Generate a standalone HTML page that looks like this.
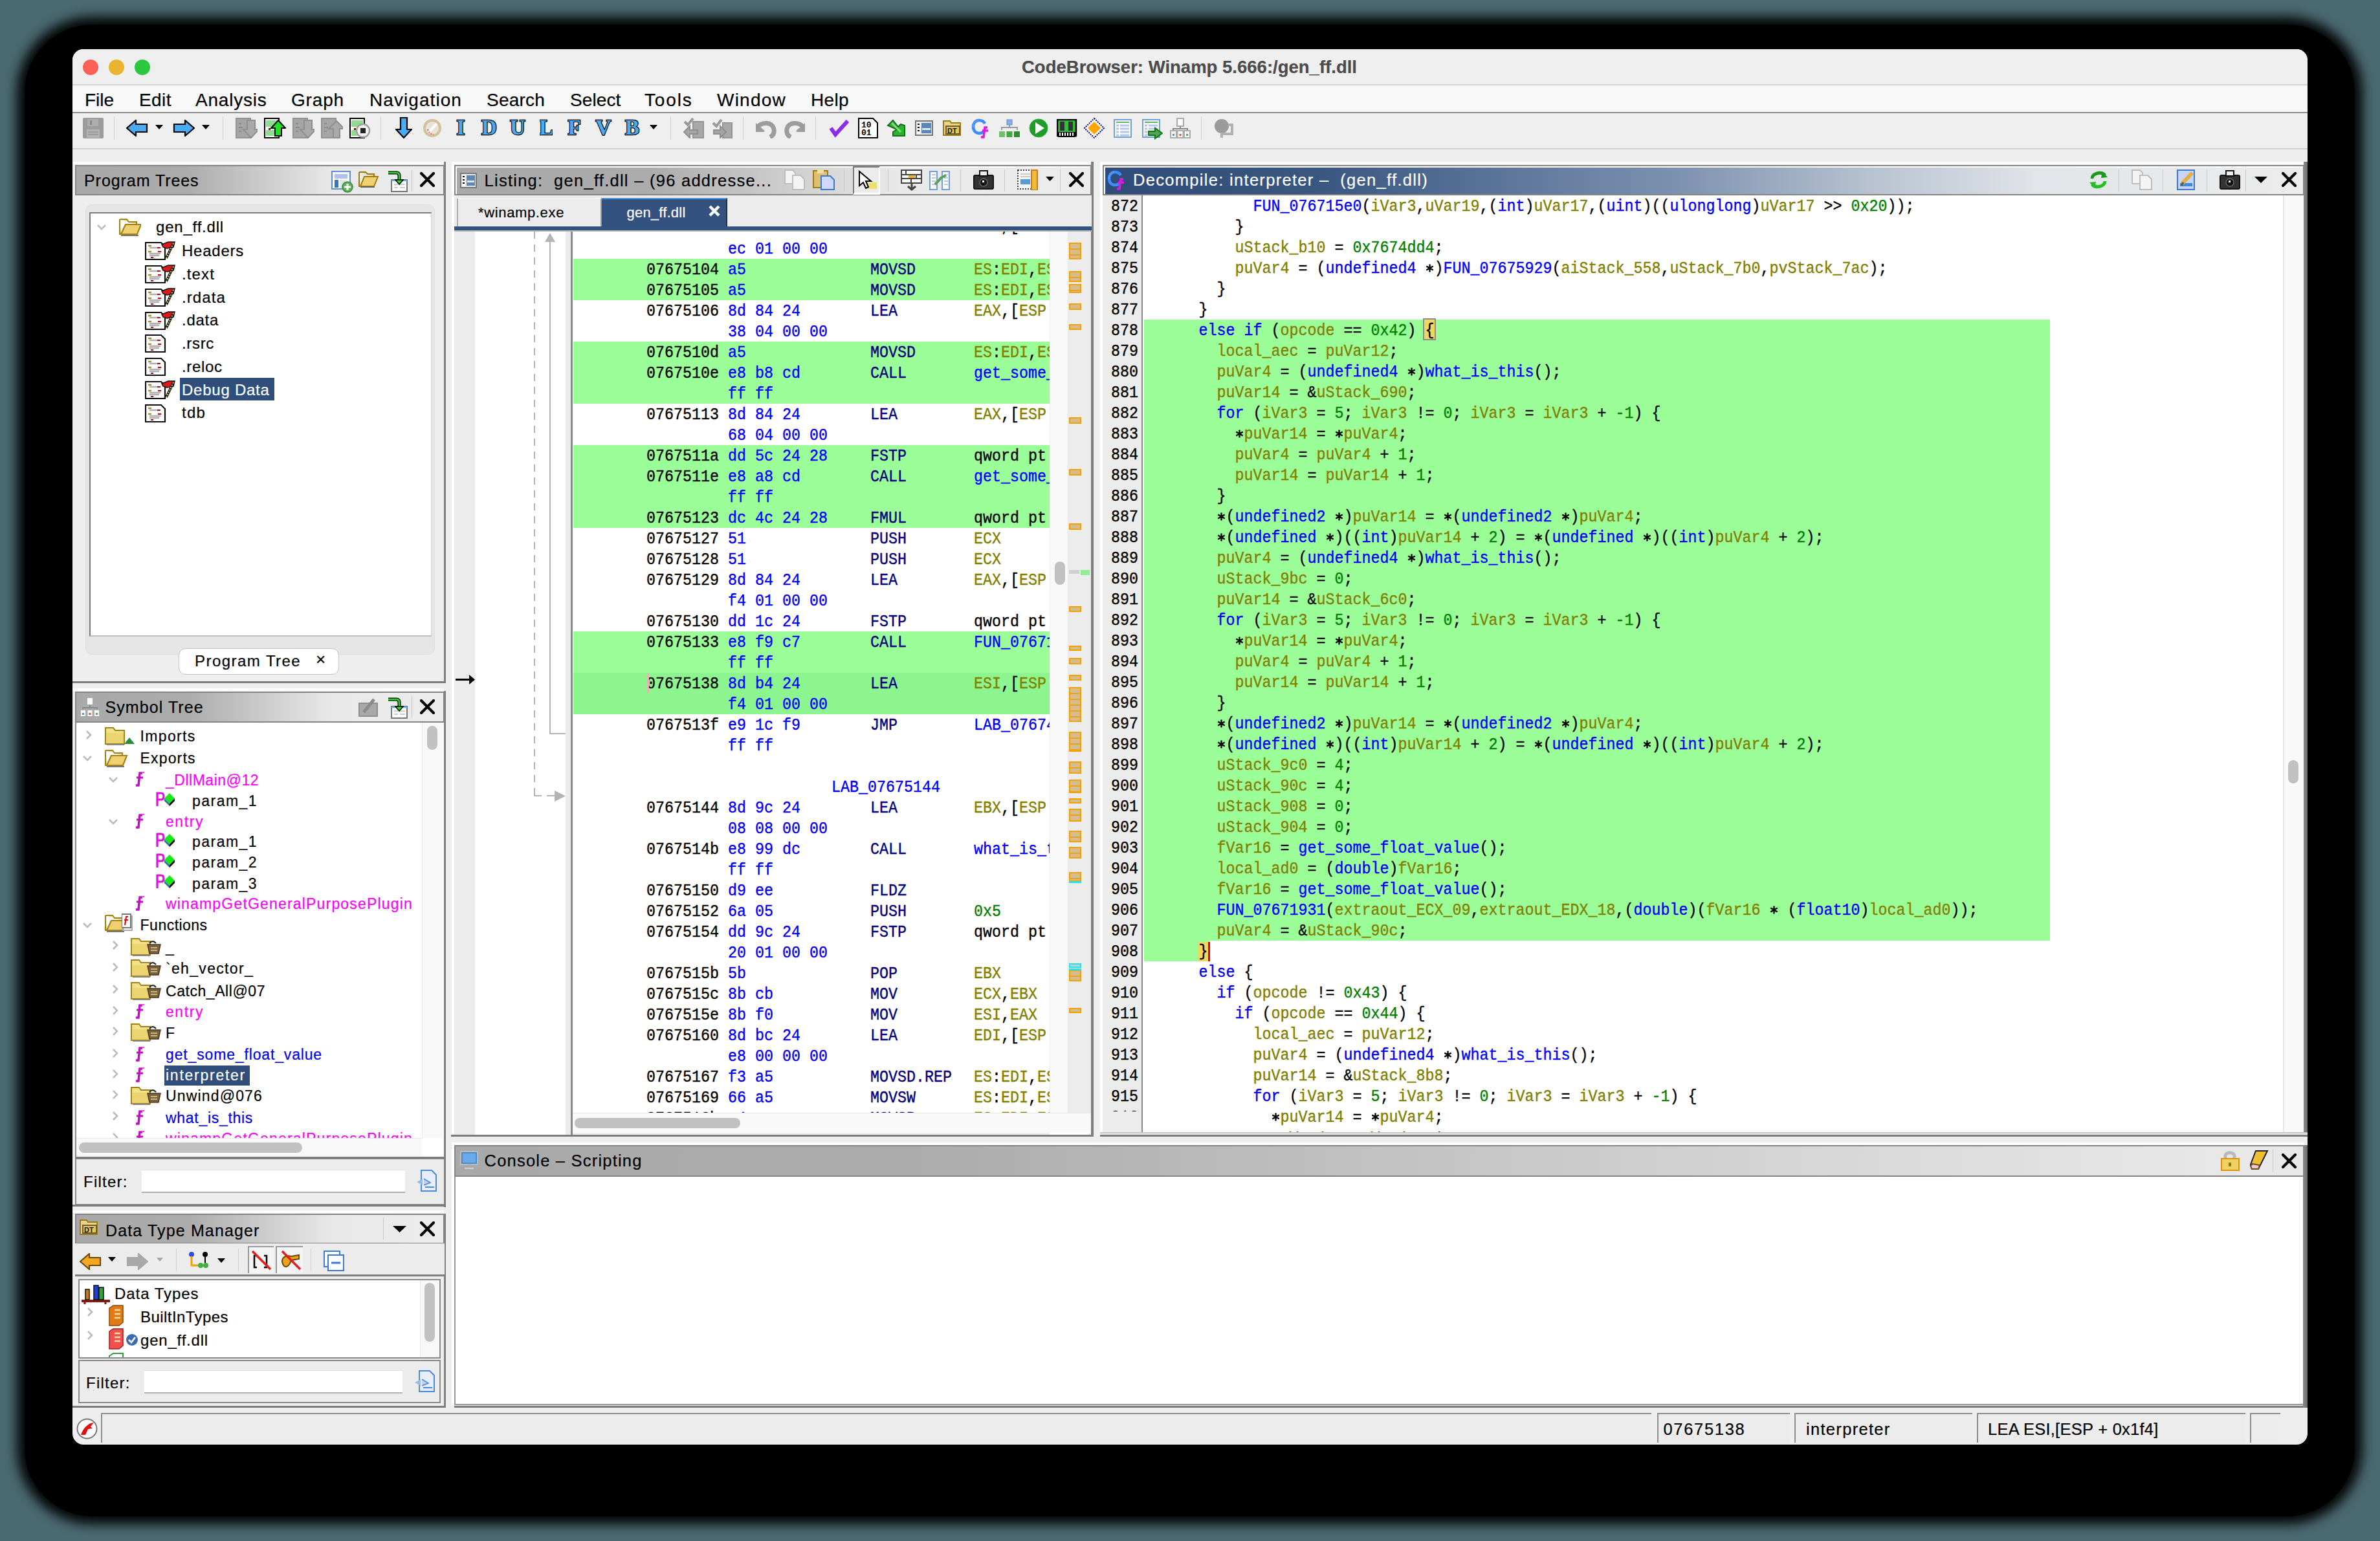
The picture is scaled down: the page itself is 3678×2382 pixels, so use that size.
<!DOCTYPE html>
<html><head><meta charset="utf-8"><style>
html,body{margin:0;padding:0;width:3678px;height:2382px;overflow:hidden;background:#4b6970;}
div{position:absolute;box-sizing:border-box;}
.s{font-family:"Liberation Sans",sans-serif;white-space:pre;-webkit-text-stroke:0.2px currentColor;}
.m{font-family:"Liberation Mono",monospace;white-space:pre;-webkit-text-stroke:0.35px currentColor;transform:scaleY(1.09);transform-origin:0 17.4px;font-size:23.330px;line-height:23.330px;}
</style></head><body>
<div style="left:38.00px;top:38.00px;width:3601px;height:2306px;background:#000;border-radius:105px;box-shadow:0 0 18px 12px rgba(0,0,0,0.95)"></div>
<div style="left:112.00px;top:76.00px;width:3454px;height:2157px;background:#eeeeee;border-radius:17px"></div>
<div style="left:112.00px;top:76.00px;width:3454px;height:56px;background:#efefef;border-radius:17px 17px 0 0;border-bottom:2px solid #d8d8d8"></div>
<div style="left:128.00px;top:92.00px;width:24px;height:24px;background:#fe5f57;border-radius:50%"></div>
<div style="left:168.00px;top:92.00px;width:24px;height:24px;background:#e9b42f;border-radius:50%"></div>
<div style="left:208.00px;top:92.00px;width:24px;height:24px;background:#29c83f;border-radius:50%"></div>
<div class="s" style="left:1579px;top:90.45px;font-size:27.5px;line-height:27.5px;color:#4b4b4b;letter-spacing:0.006px;font-weight:bold;">CodeBrowser: Winamp 5.666:/gen_ff.dll</div>
<div style="left:112.00px;top:133.00px;width:3454px;height:42px;background:#f8f8f8;border-bottom:2px solid #8f8f8f"></div>
<div class="s" style="left:131px;top:141.04px;font-size:28px;line-height:28px;color:#000;letter-spacing:-0.029px;">File</div>
<div class="s" style="left:215px;top:141.04px;font-size:28px;line-height:28px;color:#000;letter-spacing:0.438px;">Edit</div>
<div class="s" style="left:302px;top:141.04px;font-size:28px;line-height:28px;color:#000;letter-spacing:0.792px;">Analysis</div>
<div class="s" style="left:450px;top:141.04px;font-size:28px;line-height:28px;color:#000;letter-spacing:0.836px;">Graph</div>
<div class="s" style="left:571px;top:141.04px;font-size:28px;line-height:28px;color:#000;letter-spacing:1.070px;">Navigation</div>
<div class="s" style="left:752px;top:141.04px;font-size:28px;line-height:28px;color:#000;letter-spacing:0.214px;">Search</div>
<div class="s" style="left:881px;top:141.04px;font-size:28px;line-height:28px;color:#000;letter-spacing:0.113px;">Select</div>
<div class="s" style="left:996px;top:141.04px;font-size:28px;line-height:28px;color:#000;letter-spacing:1.847px;">Tools</div>
<div class="s" style="left:1108px;top:141.04px;font-size:28px;line-height:28px;color:#000;letter-spacing:1.236px;">Window</div>
<div class="s" style="left:1253px;top:141.04px;font-size:28px;line-height:28px;color:#000;letter-spacing:0.354px;">Help</div>
<div style="left:112.00px;top:175.00px;width:3454px;height:56px;background:#efefef;border-bottom:2px solid #d0d0d0"></div>
<div style="left:112.00px;top:250.00px;width:574px;height:4px;background:#fff"></div>
<div style="left:112.00px;top:1064.00px;width:574px;height:4px;background:#fff"></div>
<div style="left:112.00px;top:1871.00px;width:574px;height:4px;background:#fff"></div>
<div style="left:698.00px;top:250.00px;width:988px;height:4px;background:#fff"></div>
<div style="left:1700.00px;top:250.00px;width:1861px;height:4px;background:#fff"></div>
<div style="left:698.00px;top:1766.00px;width:2863px;height:4px;background:#fff"></div>
<div style="left:698.00px;top:250.00px;width:4px;height:1504px;background:#fff"></div>
<div style="left:1700.00px;top:250.00px;width:4px;height:1500px;background:#fff"></div>
<div style="left:698.00px;top:1766.00px;width:4px;height:406px;background:#fff"></div>
<div style="left:686.00px;top:250.00px;width:3px;height:806px;background:#7f7f7f"></div>
<div style="left:116.00px;top:255.00px;width:571px;height:47px;background:linear-gradient(to right,#a9a9a9 0%,#ababab 30%,#d2d2d2 55%,#e9e9e9 70%,#ececec 100%);border:2px solid #858585"></div>
<div class="s" style="left:130px;top:266.50px;font-size:25px;line-height:25px;color:#000;letter-spacing:0.940px;">Program Trees</div>
<div style="left:132.00px;top:316.00px;width:540px;height:696px;background:#e5e5e5;border-radius:10px;border:1px solid #dedede"></div>
<div style="left:138.00px;top:328.00px;width:529px;height:656px;background:#fff;border-top:2px solid #7c7c7c;border-left:2px solid #7c7c7c;border-right:1px solid #cfcfcf;border-bottom:2px solid #c0c0c0"></div>
<div class="s" style="left:241px;top:339.32px;font-size:24px;line-height:24px;color:#000;letter-spacing:0.803px;">gen_ff.dll</div>
<div class="s" style="left:281px;top:376.12px;font-size:24px;line-height:24px;color:#000;letter-spacing:0.755px;">Headers</div>
<div class="s" style="left:281px;top:411.87px;font-size:24px;line-height:24px;color:#000;letter-spacing:1.130px;">.text</div>
<div class="s" style="left:281px;top:447.62px;font-size:24px;line-height:24px;color:#000;letter-spacing:1.105px;">.rdata</div>
<div class="s" style="left:281px;top:483.37px;font-size:24px;line-height:24px;color:#000;letter-spacing:0.724px;">.data</div>
<div class="s" style="left:281px;top:519.12px;font-size:24px;line-height:24px;color:#000;letter-spacing:0.670px;">.rsrc</div>
<div class="s" style="left:281px;top:554.87px;font-size:24px;line-height:24px;color:#000;letter-spacing:0.652px;">.reloc</div>
<div style="left:278.00px;top:584.00px;width:146px;height:35px;background:#2f4e7c"></div>
<div class="s" style="left:281px;top:590.62px;font-size:24px;line-height:24px;color:#fff;letter-spacing:0.751px;">Debug Data</div>
<div class="s" style="left:281px;top:626.37px;font-size:24px;line-height:24px;color:#000;letter-spacing:1.212px;">tdb</div>
<div style="left:276.00px;top:1002.00px;width:248px;height:41px;background:#fff;border:1px solid #c4c4c4;border-radius:11px"></div>
<div class="s" style="left:301px;top:1010.32px;font-size:24px;line-height:24px;color:#000;letter-spacing:1.454px;">Program Tree</div>
<div class="s" style="left:488px;top:1005.68px;font-size:26px;line-height:26px;color:#000;letter-spacing:0.000px;">×</div>
<div style="left:112.00px;top:1053.00px;width:577px;height:3px;background:#7c7c7c"></div>
<div style="left:686.00px;top:1068.00px;width:3px;height:722px;background:#7f7f7f"></div>
<div style="left:116.00px;top:1069.00px;width:571px;height:48px;background:linear-gradient(to right,#a9a9a9 0%,#ababab 30%,#d2d2d2 55%,#e9e9e9 70%,#ececec 100%);border:2px solid #858585"></div>
<div class="s" style="left:162.5px;top:1081.10px;font-size:25px;line-height:25px;color:#000;letter-spacing:1.083px;">Symbol Tree</div>
<div style="left:116.00px;top:1117.00px;width:570px;height:672px;background:#fff;border-left:2px solid #8a8a8a"></div>
<div style="left:652.00px;top:1117.00px;width:32px;height:642px;background:#f8f8f8;border-left:1px solid #e6e6e6"></div>
<div style="left:660.00px;top:1122.00px;width:16px;height:37px;background:#c1c1c1;border-radius:8px"></div>
<div style="left:118.00px;top:1759.00px;width:534px;height:30px;background:#f8f8f8;border-top:1px solid #e6e6e6"></div>
<div style="left:122.00px;top:1766.00px;width:345px;height:16px;background:#c1c1c1;border-radius:8px"></div>
<div style="left:116.00px;top:1788.00px;width:573px;height:3px;background:#7c7c7c"></div>
<div style="left:116.00px;top:1791.00px;width:573px;height:72px;background:#ececec;border:2px solid #8a8a8a;border-top:1px solid #8a8a8a"></div>
<div class="s" style="left:129px;top:1815.32px;font-size:24px;line-height:24px;color:#000;letter-spacing:1.229px;">Filter:</div>
<div style="left:219.00px;top:1808.00px;width:407px;height:36px;background:#fff;border-top:1px solid #e0e0e0;border-bottom:2px solid #b0b0b0"></div>
<div style="left:686.00px;top:1791.00px;width:3px;height:75px;background:#7f7f7f"></div>
<div style="left:112.00px;top:1862.00px;width:577px;height:3px;background:#7c7c7c"></div>
<div style="left:686.00px;top:1876.00px;width:3px;height:300px;background:#7f7f7f"></div>
<div style="left:116.00px;top:1876.00px;width:571px;height:47px;background:linear-gradient(to right,#a9a9a9 0%,#ababab 30%,#d2d2d2 55%,#e9e9e9 70%,#ececec 100%);border:2px solid #858585"></div>
<div class="s" style="left:163px;top:1889.50px;font-size:25px;line-height:25px;color:#000;letter-spacing:1.143px;">Data Type Manager</div>
<div style="left:116.00px;top:1922.00px;width:571px;height:51px;background:#ececec;border-bottom:3px solid #7f7f7f"></div>
<div style="left:121.00px;top:1977.00px;width:560px;height:123px;background:#fff;border:2px solid #8a8a8a"></div>
<div style="left:649.00px;top:1979.00px;width:30px;height:119px;background:#f8f8f8;border-left:1px solid #e6e6e6"></div>
<div style="left:656.00px;top:1983.00px;width:16px;height:91px;background:#c1c1c1;border-radius:8px"></div>
<div class="s" style="left:177px;top:1988.32px;font-size:24px;line-height:24px;color:#000;letter-spacing:0.961px;">Data Types</div>
<div class="s" style="left:217px;top:2024.32px;font-size:24px;line-height:24px;color:#000;letter-spacing:0.439px;">BuiltInTypes</div>
<div class="s" style="left:217px;top:2060.32px;font-size:24px;line-height:24px;color:#000;letter-spacing:0.803px;">gen_ff.dll</div>
<div style="left:121.00px;top:2102.00px;width:560px;height:67px;background:#ececec;border:2px solid #8a8a8a"></div>
<div class="s" style="left:133px;top:2126.02px;font-size:24px;line-height:24px;color:#000;letter-spacing:1.229px;">Filter:</div>
<div style="left:223.00px;top:2118.00px;width:399px;height:36px;background:#fff;border-top:1px solid #e0e0e0;border-bottom:2px solid #b0b0b0"></div>
<div style="left:112.00px;top:2173.00px;width:577px;height:3px;background:#7c7c7c"></div>
<div style="left:1686.00px;top:250.00px;width:4px;height:1507px;background:#7f7f7f"></div>
<div style="left:697.00px;top:1754.00px;width:993px;height:3px;background:#7c7c7c"></div>
<div style="left:702.00px;top:255.00px;width:985px;height:47px;background:linear-gradient(to right,#a9a9a9 0%,#ababab 30%,#d2d2d2 55%,#e9e9e9 70%,#ececec 100%);border:2px solid #858585"></div>
<div style="left:704.00px;top:257.00px;width:981px;height:2px;background:#fff"></div>
<div style="left:704.00px;top:257.00px;width:2px;height:43px;background:#fff"></div>
<div class="s" style="left:748px;top:267.50px;font-size:25px;line-height:25px;color:#000;letter-spacing:0.750px;"></div>
<div class="s" style="left:748.5px;top:267.09px;font-size:25.5px;line-height:25.5px;color:#000;letter-spacing:1.265px;">Listing:  gen_ff.dll – (96 addresse...</div>
<div style="left:702.00px;top:302.00px;width:985px;height:48px;background:#ececec"></div>
<div style="left:706.00px;top:306.00px;width:224px;height:44px;background:#ececec;border-left:2px solid #b0b0b0;border-top:1px solid #fff;border-right:2px solid #9a9a9a"></div>
<div class="s" style="left:739px;top:317.96px;font-size:22px;line-height:22px;color:#000;letter-spacing:0.641px;">*winamp.exe</div>
<div style="left:930.00px;top:306.00px;width:194px;height:44px;background:#33527f;border-top:2px solid #4a90d9;border-right:2px solid #1d2f4a"></div>
<div class="s" style="left:968.5px;top:317.96px;font-size:22px;line-height:22px;color:#fff;letter-spacing:0.211px;">gen_ff.dll</div>
<div style="left:702.00px;top:350.00px;width:985px;height:6px;background:#33527f"></div>
<div style="left:702.00px;top:356.00px;width:985px;height:2px;background:#b8b8b8"></div>
<div style="left:702.00px;top:358.00px;width:32px;height:1396px;background:#ececec"></div>
<div style="left:734.00px;top:358.00px;width:140px;height:1396px;background:#fff"></div>
<div style="left:874.00px;top:358.00px;width:8px;height:1396px;background:#ececec"></div>
<div style="left:882.00px;top:358.00px;width:3px;height:1396px;background:#8a8a8a"></div>
<div style="left:885.00px;top:358.00px;width:801px;height:1362px;background:#fff"></div>
<div style="left:1622.00px;top:358.00px;width:28px;height:1362px;background:#f9f9f9;border-left:1px solid #ececec"></div>
<div style="left:1650.00px;top:358.00px;width:36px;height:1362px;background:#ececec"></div>
<div style="left:1622.00px;top:1720.00px;width:64px;height:34px;background:#fff"></div>
<div style="left:885.00px;top:1720.00px;width:801px;height:31px;background:#f9f9f9;border-top:1px solid #e6e6e6"></div>
<div style="left:888.00px;top:1728.00px;width:256px;height:16px;background:#c1c1c1;border-radius:8px"></div>
<div style="left:1630.00px;top:868.00px;width:16px;height:36px;background:#c1c1c1;border-radius:8px"></div>
<div style="left:3560.00px;top:250.00px;width:6px;height:1507px;background:linear-gradient(to right,#8a8a8a,#6e6e6e)"></div>
<div style="left:1704.00px;top:255.00px;width:1857px;height:47px;background:linear-gradient(to right,#2f4c78 0%,#3a5782 18%,#7d92b0 48%,#b8c2d0 64%,#e2e5e9 78%,#ececec 100%);border:2px solid #858585"></div>
<div style="left:1706.00px;top:257.00px;width:1853px;height:2px;background:#fff"></div>
<div style="left:1706.00px;top:257.00px;width:2px;height:43px;background:#fff"></div>
<div class="s" style="left:0px;top:-20.50px;font-size:25px;line-height:25px;color:#fff;letter-spacing:0.750px;"></div>
<div class="s" style="left:1751px;top:266.09px;font-size:25.5px;line-height:25.5px;color:#fff;letter-spacing:1.308px;">Decompile: interpreter –  (gen_ff.dll)</div>
<div style="left:1704.00px;top:302.00px;width:61px;height:1448px;background:#ececec"></div>
<div style="left:1764.00px;top:302.00px;width:2px;height:1448px;background:#8a8a8a"></div>
<div style="left:1766.00px;top:302.00px;width:1762px;height:1448px;background:#fff"></div>
<div style="left:3528.00px;top:302.00px;width:32px;height:1448px;background:#f9f9f9;border-left:2px solid #e8e8e8"></div>
<div style="left:3536.00px;top:1175.00px;width:16px;height:36px;background:#c1c1c1;border-radius:8px"></div>
<div style="left:1700.00px;top:1750.00px;width:1866px;height:7px;background:linear-gradient(#c8c8c8 0,#c8c8c8 2px,#ececec 2px,#ececec 4px,#7c7c7c 4px)"></div>
<div style="left:702.00px;top:1770.00px;width:2859px;height:49px;background:linear-gradient(to right,#a9a9a9 0%,#acacac 25%,#c2c2c2 50%,#d8d8d8 75%,#e8e8e8 95%);border:2px solid #858585"></div>
<div class="s" style="left:0px;top:-20.50px;font-size:25px;line-height:25px;color:#000;letter-spacing:0.750px;"></div>
<div class="s" style="left:748.6px;top:1782.49px;font-size:25.5px;line-height:25.5px;color:#000;letter-spacing:1.204px;">Console – Scripting</div>
<div style="left:702.00px;top:1819.00px;width:2859px;height:352px;background:#fff;border-left:2px solid #9a9a9a"></div>
<div style="left:702.00px;top:2170.00px;width:2864px;height:6px;background:linear-gradient(#9a9a9a 0,#9a9a9a 2px,#ececec 2px,#ececec 3px,#7c7c7c 3px)"></div>
<div style="left:3559.00px;top:1770.00px;width:7px;height:406px;background:linear-gradient(to right,#8a8a8a,#6e6e6e)"></div>
<div style="left:156.00px;top:2184.00px;width:2396px;height:46px;background:#ececec;border-top:2px solid #8e8e8e;border-left:2px solid #8e8e8e"></div>
<div style="left:2561.00px;top:2184.00px;width:205px;height:46px;background:#ececec;border-top:2px solid #8e8e8e;border-left:2px solid #8e8e8e"></div>
<div style="left:2773.00px;top:2184.00px;width:275px;height:46px;background:#ececec;border-top:2px solid #8e8e8e;border-left:2px solid #8e8e8e"></div>
<div style="left:3055.00px;top:2184.00px;width:415px;height:46px;background:#ececec;border-top:2px solid #8e8e8e;border-left:2px solid #8e8e8e"></div>
<div style="left:3477.00px;top:2184.00px;width:47px;height:46px;background:#ececec;border-top:2px solid #8e8e8e;border-left:2px solid #8e8e8e"></div>
<div class="s" style="left:2570.5px;top:2197.09px;font-size:25.5px;line-height:25.5px;color:#000;letter-spacing:1.693px;">07675138</div>
<div class="s" style="left:2791px;top:2197.09px;font-size:25.5px;line-height:25.5px;color:#000;letter-spacing:1.307px;">interpreter</div>
<div class="s" style="left:3072px;top:2197.09px;font-size:25.5px;line-height:25.5px;color:#000;letter-spacing:0.257px;">LEA ESI,[ESP + 0x1f4]</div>
<svg style="position:absolute;left:128.00px;top:182.00px" width="32" height="32" viewBox="0 0 32 32"><rect x="0" y="0" width="32" height="32" rx="2" fill="#9c9c9c"/><rect x="7" y="2" width="17" height="11" fill="#adadad"/><rect x="11" y="4" width="3" height="7" fill="#8a8a8a"/><rect x="6" y="18" width="20" height="13" fill="#b3b3b3"/><path d="M8,22H24M8,26H24" stroke="#9a9a9a" stroke-width="2"/></svg>
<div style="left:176.00px;top:180.00px;width:1px;height:36px;background:#cfcfcf"></div>
<svg style="position:absolute;left:195.00px;top:185.00px" width="34" height="26" viewBox="0 0 34 26"><polygon points="1,13 15,1 15,7 32,7 32,19 15,19 15,25" fill="#49abf4" stroke="#000" stroke-width="2.2"/></svg>
<svg style="position:absolute;left:240.00px;top:193.00px" width="12" height="7" viewBox="0 0 12 7"><polygon points="0,0 12,0 6.0,7" fill="#000"/></svg>
<svg style="position:absolute;left:267.00px;top:185.00px" width="34" height="26" viewBox="0 0 34 26"><polygon points="33,13 19,1 19,7 2,7 2,19 19,19 19,25" fill="#49abf4" stroke="#000" stroke-width="2.2"/></svg>
<svg style="position:absolute;left:312.00px;top:193.00px" width="12" height="7" viewBox="0 0 12 7"><polygon points="0,0 12,0 6.0,7" fill="#000"/></svg>
<div style="left:344.00px;top:180.00px;width:1px;height:36px;background:#cfcfcf"></div>
<svg style="position:absolute;left:364.00px;top:182.00px" width="34" height="32" viewBox="0 0 34 32"><rect x="1" y="1" width="22" height="30" fill="#a5a5a5" stroke="#929292" stroke-width="2"/><path d="M5,9h4M5,15h6M5,21h4" stroke="#8a8a8a" stroke-width="2"/><polygon points="12,18 18,18 18,4 30,4 30,18 36,18 24,31" fill="#a9a9a9" stroke="#8e8e8e" stroke-width="2"/></svg>
<svg style="position:absolute;left:408.00px;top:182.00px" width="34" height="32" viewBox="0 0 34 32"><rect x="1" y="1" width="22" height="30" fill="#fff" stroke="#000" stroke-width="2"/><rect x="3" y="4" width="18" height="10" fill="#8fdc8f"/><rect x="3" y="19" width="18" height="9" fill="#8fdc8f"/><rect x="7" y="16" width="3" height="3" fill="#a00"/><polygon points="11,16 22,4 33,16 27,16 27,28 17,28 17,16" fill="#1fe01f" stroke="#000" stroke-width="2"/></svg>
<svg style="position:absolute;left:452.00px;top:182.00px" width="34" height="32" viewBox="0 0 34 32"><rect x="1" y="1" width="22" height="30" fill="#a5a5a5" stroke="#929292" stroke-width="2"/><path d="M5,9h4M5,15h6M5,21h4" stroke="#8a8a8a" stroke-width="2"/><polygon points="12,18 18,18 18,4 30,4 30,18 36,18 24,31" fill="#a9a9a9" stroke="#8e8e8e" stroke-width="2"/></svg>
<svg style="position:absolute;left:496.00px;top:182.00px" width="34" height="32" viewBox="0 0 34 32"><rect x="1" y="1" width="22" height="30" fill="#a5a5a5" stroke="#929292" stroke-width="2"/><path d="M5,9h4M5,15h6M5,21h4" stroke="#8a8a8a" stroke-width="2"/><polygon points="12,17 24,5 36,17 29,17 29,31 19,31 19,17" fill="#a9a9a9" stroke="#8e8e8e" stroke-width="2"/></svg>
<svg style="position:absolute;left:540.00px;top:182.00px" width="34" height="32" viewBox="0 0 34 32"><rect x="1" y="1" width="22" height="30" fill="#fff" stroke="#000" stroke-width="2"/><rect x="3" y="4" width="18" height="10" fill="#8fdc8f"/><rect x="3" y="19" width="18" height="9" fill="#8fdc8f"/><rect x="7" y="16" width="3" height="3" fill="#a00"/><circle cx="21" cy="20" r="10" fill="#f4f4f4" stroke="#a0a0a0" stroke-width="2.5"/><rect x="17" y="16" width="8" height="8" fill="#222"/></svg>
<div style="left:588.00px;top:180.00px;width:1px;height:36px;background:#cfcfcf"></div>
<svg style="position:absolute;left:611.00px;top:181.00px" width="26" height="34" viewBox="0 0 26 34"><polygon points="8,1 18,1 18,19 25,19 13,32 1,19 8,19" fill="#49abf4" stroke="#000" stroke-width="2.2"/></svg>
<svg style="position:absolute;left:653.00px;top:183.00px" width="30" height="30" viewBox="0 0 30 30"><circle cx="15" cy="15" r="12" fill="#e8e4dc" stroke="#d3c19b" stroke-width="4"/><path d="M9,22 L22,8" stroke="#fff" stroke-width="4"/><path d="M8,17 Q10,24 17,25" stroke="#e05050" stroke-width="2" stroke-dasharray="2 2" fill="none"/></svg>
<svg style="position:absolute;left:702.00px;top:182.00px" width="20" height="30" viewBox="0 0 20 30"><text x="10.0" y="26" text-anchor="middle" font-family="Liberation Serif" font-weight="bold" font-size="33" fill="#49abf4" stroke="#000" stroke-width="2.4" paint-order="stroke">I</text></svg>
<svg style="position:absolute;left:742.00px;top:182.00px" width="28" height="30" viewBox="0 0 28 30"><text x="14.0" y="26" text-anchor="middle" font-family="Liberation Serif" font-weight="bold" font-size="33" fill="#49abf4" stroke="#000" stroke-width="2.4" paint-order="stroke">D</text></svg>
<svg style="position:absolute;left:786.00px;top:182.00px" width="28" height="30" viewBox="0 0 28 30"><text x="14.0" y="26" text-anchor="middle" font-family="Liberation Serif" font-weight="bold" font-size="33" fill="#49abf4" stroke="#000" stroke-width="2.4" paint-order="stroke">U</text></svg>
<svg style="position:absolute;left:834.00px;top:182.00px" width="20" height="30" viewBox="0 0 20 30"><text x="10.0" y="26" text-anchor="middle" font-family="Liberation Serif" font-weight="bold" font-size="33" fill="#49abf4" stroke="#000" stroke-width="2.4" paint-order="stroke">L</text></svg>
<svg style="position:absolute;left:877.00px;top:182.00px" width="21" height="30" viewBox="0 0 21 30"><text x="10.5" y="26" text-anchor="middle" font-family="Liberation Serif" font-weight="bold" font-size="33" fill="#49abf4" stroke="#000" stroke-width="2.4" paint-order="stroke">F</text></svg>
<svg style="position:absolute;left:919.00px;top:182.00px" width="27" height="30" viewBox="0 0 27 30"><text x="13.5" y="26" text-anchor="middle" font-family="Liberation Serif" font-weight="bold" font-size="33" fill="#49abf4" stroke="#000" stroke-width="2.4" paint-order="stroke">V</text></svg>
<svg style="position:absolute;left:964.00px;top:182.00px" width="26" height="30" viewBox="0 0 26 30"><text x="13.0" y="26" text-anchor="middle" font-family="Liberation Serif" font-weight="bold" font-size="33" fill="#49abf4" stroke="#000" stroke-width="2.4" paint-order="stroke">B</text></svg>
<svg style="position:absolute;left:1004.00px;top:193.00px" width="12" height="7" viewBox="0 0 12 7"><polygon points="0,0 12,0 6.0,7" fill="#000"/></svg>
<div style="left:1036.00px;top:180.00px;width:1px;height:36px;background:#cfcfcf"></div>
<svg style="position:absolute;left:1056.00px;top:182.00px" width="32" height="32" viewBox="0 0 32 32"><path d="M2,6 L7,11 L15,1" stroke="#9a9a9a" stroke-width="4" fill="none"/><rect x="15" y="6" width="16" height="25" fill="#a8a8a8" stroke="#959595" stroke-width="2"/><polygon points="1,22 10,13 10,19 22,19 22,25 10,25 10,31" fill="#a5a5a5" stroke="#8e8e8e" stroke-width="2"/></svg>
<svg style="position:absolute;left:1100.00px;top:182.00px" width="32" height="32" viewBox="0 0 32 32"><path d="M2,8 L7,13 L15,3" stroke="#9a9a9a" stroke-width="4" fill="none"/><rect x="17" y="8" width="14" height="23" fill="#a8a8a8" stroke="#959595" stroke-width="2"/><polygon points="3,19 13,19 13,13 22,22 13,31 13,25 3,25" fill="#a5a5a5" stroke="#8e8e8e" stroke-width="2"/></svg>
<div style="left:1148.00px;top:180.00px;width:1px;height:36px;background:#cfcfcf"></div>
<svg style="position:absolute;left:1168.00px;top:186.00px" width="32" height="28" viewBox="0 0 32 28"><g><path d="M4,8 L4,16 L14,16" fill="#9c9c9c"/><path d="M3,10 C10,2 26,2 28,14 C29,20 26,24 22,26" stroke="#9c9c9c" stroke-width="7" fill="none"/><polygon points="0,4 0,18 14,18" fill="#9c9c9c"/></g></svg>
<svg style="position:absolute;left:1212.00px;top:186.00px" width="32" height="28" viewBox="0 0 32 28"><g transform="translate(32,0) scale(-1,1)"><path d="M4,8 L4,16 L14,16" fill="#9c9c9c"/><path d="M3,10 C10,2 26,2 28,14 C29,20 26,24 22,26" stroke="#9c9c9c" stroke-width="7" fill="none"/><polygon points="0,4 0,18 14,18" fill="#9c9c9c"/></g></svg>
<div style="left:1260.00px;top:180.00px;width:1px;height:36px;background:#cfcfcf"></div>
<svg style="position:absolute;left:1281.00px;top:183.00px" width="32" height="30" viewBox="0 0 32 30"><path d="M3,15 L10,25 L29,4" stroke="#8d2ee6" stroke-width="6" fill="none" stroke-linejoin="miter"/></svg>
<svg style="position:absolute;left:1326.00px;top:182.00px" width="31" height="32" viewBox="0 0 31 32"><path d="M1,1 H23 L30,8 V31 H1 Z" fill="#fff" stroke="#000" stroke-width="2"/><text x="5" y="15" font-family="Liberation Mono" font-weight="bold" font-size="13" fill="#000">10</text><text x="5" y="27" font-family="Liberation Mono" font-weight="bold" font-size="13" fill="#000">01</text></svg>
<svg style="position:absolute;left:1370.00px;top:184.00px" width="30" height="28" viewBox="0 0 30 28"><polygon points="2,10 10,2 18,12 22,8 28,10 28,26 10,26 10,20 16,16" fill="#2ab52a" stroke="#1a6e1a" stroke-width="2"/><path d="M8,6 L22,20" stroke="#7be07b" stroke-width="3"/></svg>
<svg style="position:absolute;left:1414.00px;top:186.00px" width="28" height="24" viewBox="0 0 28 24"><rect x="1" y="1" width="26" height="22" fill="#e8e8e8" stroke="#777" stroke-width="2"/><rect x="3" y="3" width="5" height="18" fill="#fff"/><path d="M5.5,5V20" stroke="#000" stroke-width="3" stroke-dasharray="2 3"/><rect x="10" y="4" width="15" height="16" fill="#5b86b8"/><rect x="11" y="12.0" width="13" height="3" fill="#e0e8f0"/></svg>
<svg style="position:absolute;left:1456.00px;top:182.00px" width="32" height="30" viewBox="0 0 32 30"><path d="M2,5 L12,5 L14,8 L28,8 L28,27 L2,27 Z" fill="#e8d48a" stroke="#9a7b14" stroke-width="2"/><rect x="5" y="12" width="23" height="14" fill="#6e5a34"/><rect x="7" y="14" width="19" height="10" fill="#e8c850"/><text x="8" y="24" font-family="Liberation Sans" font-weight="bold" font-size="11" fill="#111">DT</text></svg>
<svg style="position:absolute;left:1501.00px;top:183.00px" width="32" height="32" viewBox="0 0 32 32"><path d="M21,8 C19,4 15,3 12,3 C6,3 3,8 3,13 C3,19 7,23 12,23 C15,23 18,22 20,19" stroke="#3c8cff" stroke-width="4.5" fill="none"/><path d="M3,13 C3,8 6,3 12,3" stroke="#7ab8ff" stroke-width="1.5" fill="none" stroke-dasharray="1.5 1.5"/><path d="M25,14 H21 L19,29 H15 M17,19 H26" stroke="#e018e0" stroke-width="3.5" fill="none"/></svg>
<svg style="position:absolute;left:1543.00px;top:183.00px" width="34" height="32" viewBox="0 0 34 32"><rect x="13" y="2" width="8" height="8" fill="#8bb0e8" stroke="#5a8ad0" stroke-width="1"/><path d="M17,10V14M5,18V14H29V18" stroke="#999" stroke-width="2" fill="none"/><rect x="1" y="20" width="9" height="9" fill="#6cc06c"/><rect x="12.5" y="20" width="9" height="9" fill="#44a844"/><rect x="24" y="20" width="9" height="9" fill="#2e8e2e"/></svg>
<svg style="position:absolute;left:1590.00px;top:182.00px" width="30" height="32" viewBox="0 0 30 32"><circle cx="15" cy="16" r="14" fill="#1e9c2a" stroke="#2fb03a" stroke-width="1"/><polygon points="10,7 24,16 10,25" fill="#fff"/></svg>
<svg style="position:absolute;left:1633.00px;top:184.00px" width="32" height="30" viewBox="0 0 32 30"><rect x="1" y="1" width="29" height="25" fill="#2ebf3e" stroke="#000" stroke-width="2.5"/><rect x="5" y="4" width="7" height="14" fill="#333"/><rect x="18" y="4" width="7" height="14" fill="#333"/><rect x="2" y="20" width="27" height="8" fill="#000"/><path d="M5,21V26M9,21V26M13,21V26M17,21V26M21,21V26M25,21V26" stroke="#fff" stroke-width="2"/></svg>
<svg style="position:absolute;left:1675.00px;top:182.00px" width="32" height="32" viewBox="0 0 32 32"><polygon points="16,1 31,16 16,31 1,16" fill="#fff" stroke="#0a0a80" stroke-width="2" stroke-dasharray="2 1.5"/><polygon points="16,6 26,16 16,26 6,16" fill="#ffa500"/></svg>
<svg style="position:absolute;left:1721.00px;top:184.00px" width="32" height="32" viewBox="0 0 32 32"><rect x="1" y="1" width="26" height="27" fill="#fff" stroke="#6fa0dc" stroke-width="2"/><path d="M4,5H24" stroke="#60b060" stroke-width="2"/><path d="M4,10H24M4,15H24M4,20H24M4,25H24" stroke="#b8c4f0" stroke-width="3"/><path d="M9,9V27" stroke="#fff" stroke-width="2"/></svg>
<svg style="position:absolute;left:1765.00px;top:184.00px" width="32" height="32" viewBox="0 0 32 32"><rect x="1" y="1" width="26" height="27" fill="#fff" stroke="#6fa0dc" stroke-width="2"/><path d="M4,5H24" stroke="#60b060" stroke-width="2"/><path d="M4,10H24M4,15H24M4,20H24M4,25H24" stroke="#b8c4f0" stroke-width="3"/><path d="M9,9V27" stroke="#fff" stroke-width="2"/><polygon points="10,19 20,19 20,14 31,22 20,30 20,25 10,25" fill="#5aa05a" stroke="#0b7a0b" stroke-width="2"/></svg>
<svg style="position:absolute;left:1808.00px;top:182.00px" width="32" height="32" viewBox="0 0 32 32"><rect x="11" y="1" width="10" height="12" fill="#fafafa" stroke="#aaa" stroke-width="2"/><path d="M16,13V17M5,21V17H27V21" stroke="#888" stroke-width="2" fill="none"/><rect x="1" y="20" width="9" height="11" fill="#fff" stroke="#aaa" stroke-width="2"/><rect x="11.5" y="20" width="9" height="11" fill="#fff" stroke="#aaa" stroke-width="2"/><rect x="22" y="20" width="9" height="11" fill="#fff" stroke="#aaa" stroke-width="2"/><rect x="4" y="25" width="3" height="3" fill="#4a90e2"/><rect x="14.5" y="25" width="3" height="3" fill="#e05030"/><rect x="25" y="25" width="3" height="3" fill="#50b050"/></svg>
<div style="left:1856.00px;top:180.00px;width:1px;height:36px;background:#cfcfcf"></div>
<svg style="position:absolute;left:1876.00px;top:183.00px" width="32" height="32" viewBox="0 0 32 32"><circle cx="12" cy="12" r="11" fill="#9a9a9a"/><path d="M22,10H28V24H12V30" stroke="#b0b0b0" stroke-width="4" fill="none"/></svg>
<svg style="position:absolute;left:512.00px;top:264.00px" width="34" height="34" viewBox="0 0 34 34"><rect x="1" y="1" width="28" height="27" fill="#fff" stroke="#5a90d8" stroke-width="2"/><rect x="5" y="5" width="20" height="7" fill="#b0c0f0"/><rect x="5" y="14" width="6" height="12" fill="#3a78b0"/><rect x="13" y="14" width="12" height="12" fill="#e6e6e6"/><circle cx="25" cy="25" r="8" fill="#5cb05c" stroke="#3a8a3a" stroke-width="1.5"/><path d="M25,20V30M20,25H30" stroke="#fff" stroke-width="3"/></svg>
<svg style="position:absolute;left:554.00px;top:262.00px" width="34" height="30" viewBox="0 0 34 30"><path d="M1,4 H11 L14,7 H24 V11" fill="#f0d878" stroke="#9a7b14" stroke-width="2"/><path d="M1,4 V26 H24 L30,11 H9 L3,26" fill="#f0d070" stroke="#9a7b14" stroke-width="2"/><path d="M3,27 H25" stroke="#666" stroke-width="2"/></svg>
<svg style="position:absolute;left:599.00px;top:264.00px" width="32" height="34" viewBox="0 0 32 34"><rect x="6" y="14" width="24" height="18" fill="#fff" stroke="#777" stroke-width="2"/><path d="M6,15H30" stroke="#4ab0ff" stroke-width="2"/><path d="M10,21h6M19,21h8M10,26h6M19,26h8" stroke="#ccc" stroke-width="2"/><path d="M1,3 H14 Q18,3 18,8 V16" stroke="#000" stroke-width="5" fill="none"/><path d="M1,3 H14 Q18,3 18,8 V16" stroke="#22e022" stroke-width="2.5" fill="none"/><polygon points="12,14 24,14 18,21" fill="#22e022" stroke="#000" stroke-width="1.5"/></svg>
<div style="left:636.00px;top:262.00px;width:1px;height:34px;background:#c8c8c8"></div>
<svg style="position:absolute;left:649.00px;top:266.00px" width="23" height="23" viewBox="0 0 23 23"><path d="M2,2 L21,21 M21,2 L2,21" stroke="#000" stroke-width="4.2" stroke-linecap="square"/></svg>
<svg style="position:absolute;left:123.00px;top:1077.00px" width="32" height="32" viewBox="0 0 32 32"><rect x="11" y="1" width="10" height="12" fill="#fafafa" stroke="#aaa" stroke-width="2"/><path d="M16,13V17M5,21V17H27V21" stroke="#888" stroke-width="2" fill="none"/><rect x="1" y="20" width="9" height="11" fill="#fff" stroke="#aaa" stroke-width="2"/><rect x="11.5" y="20" width="9" height="11" fill="#fff" stroke="#aaa" stroke-width="2"/><rect x="22" y="20" width="9" height="11" fill="#fff" stroke="#aaa" stroke-width="2"/><rect x="4" y="25" width="3" height="3" fill="#4a90e2"/><rect x="14.5" y="25" width="3" height="3" fill="#e05030"/><rect x="25" y="25" width="3" height="3" fill="#50b050"/></svg>
<svg style="position:absolute;left:554.00px;top:1077.00px" width="32" height="32" viewBox="0 0 32 32"><rect x="1" y="10" width="28" height="20" fill="#a8a8a8" stroke="#8e8e8e" stroke-width="2"/><path d="M8,24 L24,4" stroke="#8a8a8a" stroke-width="5"/></svg>
<svg style="position:absolute;left:599.00px;top:1078.00px" width="32" height="34" viewBox="0 0 32 34"><rect x="6" y="14" width="24" height="18" fill="#fff" stroke="#777" stroke-width="2"/><path d="M6,15H30" stroke="#4ab0ff" stroke-width="2"/><path d="M10,21h6M19,21h8M10,26h6M19,26h8" stroke="#ccc" stroke-width="2"/><path d="M1,3 H14 Q18,3 18,8 V16" stroke="#000" stroke-width="5" fill="none"/><path d="M1,3 H14 Q18,3 18,8 V16" stroke="#22e022" stroke-width="2.5" fill="none"/><polygon points="12,14 24,14 18,21" fill="#22e022" stroke="#000" stroke-width="1.5"/></svg>
<div style="left:636.00px;top:1076.00px;width:1px;height:34px;background:#c8c8c8"></div>
<svg style="position:absolute;left:649.00px;top:1081.00px" width="23" height="23" viewBox="0 0 23 23"><path d="M2,2 L21,21 M21,2 L2,21" stroke="#000" stroke-width="4.2" stroke-linecap="square"/></svg>
<svg style="position:absolute;left:122.00px;top:1881.00px" width="32" height="30" viewBox="0 0 32 30"><path d="M2,5 L12,5 L14,8 L28,8 L28,27 L2,27 Z" fill="#e8d48a" stroke="#9a7b14" stroke-width="2"/><rect x="5" y="12" width="23" height="14" fill="#6e5a34"/><rect x="7" y="14" width="19" height="10" fill="#e8c850"/><text x="8" y="24" font-family="Liberation Sans" font-weight="bold" font-size="11" fill="#111">DT</text></svg>
<div style="left:592.00px;top:1882.00px;width:1px;height:34px;background:#c8c8c8"></div>
<svg style="position:absolute;left:607.00px;top:1895.00px" width="21" height="10" viewBox="0 0 21 10"><polygon points="0,0 21,0 10.5,10" fill="#000"/></svg>
<svg style="position:absolute;left:649.00px;top:1888.00px" width="23" height="23" viewBox="0 0 23 23"><path d="M2,2 L21,21 M21,2 L2,21" stroke="#000" stroke-width="4.2" stroke-linecap="square"/></svg>
<svg style="position:absolute;left:123.00px;top:1937.00px" width="34" height="26" viewBox="0 0 34 26"><polygon points="1,13 15,1 15,7 32,7 32,19 15,19 15,25" fill="#f5a623" stroke="#6a4a00" stroke-width="2.2"/></svg>
<svg style="position:absolute;left:167.00px;top:1943.00px" width="12" height="7" viewBox="0 0 12 7"><polygon points="0,0 12,0 6.0,7" fill="#000"/></svg>
<svg style="position:absolute;left:195.00px;top:1937.00px" width="34" height="26" viewBox="0 0 34 26"><polygon points="33,13 19,1 19,7 2,7 2,19 19,19 19,25" fill="#a8a8a8" stroke="#a8a8a8" stroke-width="2.2"/></svg>
<svg style="position:absolute;left:242.00px;top:1944.00px" width="10" height="6" viewBox="0 0 10 6"><polygon points="0,0 10,0 5.0,6" fill="#a8a8a8"/></svg>
<div style="left:272.00px;top:1930.00px;width:1px;height:35px;background:#d0d0d0"></div>
<svg style="position:absolute;left:291.00px;top:1934.00px" width="32" height="32" viewBox="0 0 32 32"><circle cx="5" cy="5" r="4" fill="#3050e0"/><circle cx="26" cy="5" r="4" fill="#000"/><path d="M5,8 V22 H20" stroke="#f0a000" stroke-width="3" fill="none"/><circle cx="19" cy="22" r="4" fill="#40b040"/><circle cx="27" cy="22" r="4" fill="#40b040"/><path d="M26,9V18" stroke="#000" stroke-width="2"/></svg>
<svg style="position:absolute;left:336.00px;top:1945.00px" width="12" height="7" viewBox="0 0 12 7"><polygon points="0,0 12,0 6.0,7" fill="#000"/></svg>
<div style="left:368.00px;top:1930.00px;width:1px;height:35px;background:#d0d0d0"></div>
<div style="left:383.00px;top:1926.00px;width:40px;height:42px;background:#f4f4f4;border-top:2px solid #9a9a9a;border-left:2px solid #9a9a9a"></div>
<div style="left:426.00px;top:1926.00px;width:42px;height:42px;background:#f4f4f4;border-top:2px solid #9a9a9a;border-left:2px solid #9a9a9a"></div>
<svg style="position:absolute;left:388.00px;top:1932.00px" width="32" height="32" viewBox="0 0 32 32"><path d="M9,9H5V27H9M20,9H24V27H20" stroke="#000" stroke-width="2.5" fill="none"/><path d="M2,2 L30,30" stroke="#e02020" stroke-width="3.5"/></svg>
<svg style="position:absolute;left:432.00px;top:1932.00px" width="34" height="32" viewBox="0 0 34 32"><path d="M4,18 C4,10 12,8 18,10 L30,8 L30,14 L18,16 C14,28 6,30 4,18Z" fill="#f0a020" stroke="#6a4a00" stroke-width="2"/><path d="M4,2 L32,30" stroke="#e02020" stroke-width="3.5"/></svg>
<div style="left:480.00px;top:1930.00px;width:1px;height:35px;background:#d0d0d0"></div>
<svg style="position:absolute;left:500.00px;top:1933.00px" width="33" height="33" viewBox="0 0 33 33"><rect x="1" y="1" width="24" height="24" fill="#fff" stroke="#3a7ad0" stroke-width="2"/><rect x="7" y="7" width="24" height="24" fill="#fff" stroke="#3a7ad0" stroke-width="2"/><path d="M12,19H26" stroke="#3a7ad0" stroke-width="3"/></svg>
<svg style="position:absolute;left:711.00px;top:267.00px" width="26" height="24" viewBox="0 0 26 24"><rect x="1" y="1" width="24" height="22" fill="#e8e8e8" stroke="#777" stroke-width="2"/><rect x="3" y="3" width="5" height="18" fill="#fff"/><path d="M5.5,5V20" stroke="#000" stroke-width="3" stroke-dasharray="2 3"/><rect x="10" y="4" width="13" height="16" fill="#5b86b8"/><rect x="11" y="12.0" width="11" height="3" fill="#e0e8f0"/></svg>
<svg style="position:absolute;left:1212.00px;top:262.00px" width="32" height="32" viewBox="0 0 32 32"><path d="M1,1H13L17,5V22H1Z" fill="#f4f4f4" stroke="#bdbdbd" stroke-width="2"/><path d="M13,9H25L31,15V31H13Z" fill="#f4f4f4" stroke="#bdbdbd" stroke-width="2"/></svg>
<svg style="position:absolute;left:1256.00px;top:262.00px" width="34" height="32" viewBox="0 0 34 32"><rect x="1" y="2" width="22" height="26" fill="#e0c070" stroke="#9a7b14" stroke-width="2"/><rect x="7" y="0" width="10" height="6" fill="#f0e0a0"/><path d="M13,10H27L33,16V31H13Z" fill="#d0d8ff" stroke="#3a7ad0" stroke-width="2"/></svg>
<div style="left:1304.00px;top:262.00px;width:1px;height:34px;background:#c8c8c8"></div>
<div style="left:1318.00px;top:257.00px;width:42px;height:44px;background:#ececec;border-top:2px solid #7c7c7c;border-left:2px solid #7c7c7c;border-right:2px solid #fff;border-bottom:3px solid #fff"></div>
<svg style="position:absolute;left:1326.00px;top:263.00px" width="32" height="32" viewBox="0 0 32 32"><rect x="12" y="19" width="17" height="10" fill="#ece070"/><polygon points="2,2 2,24 8,19 12,28 16,26 12,17 20,17" fill="#fff" stroke="#000" stroke-width="2"/></svg>
<div style="left:1372.00px;top:262.00px;width:1px;height:34px;background:#c8c8c8"></div>
<svg style="position:absolute;left:1392.00px;top:262.00px" width="34" height="34" viewBox="0 0 34 34"><rect x="1" y="1" width="31" height="20" fill="#fff" stroke="#444" stroke-width="2"/><path d="M1,8H32M1,14H32M8,1V8M24,8V14M16,14V21" stroke="#444" stroke-width="2"/><rect x="12" y="9" width="10" height="4" fill="#f0b030"/><path d="M17,22V30M11,26L17,31L23,26" stroke="#444" stroke-width="3" fill="none"/></svg>
<svg style="position:absolute;left:1436.00px;top:263.00px" width="32" height="32" viewBox="0 0 32 32"><rect x="1" y="2" width="11" height="28" fill="#fff" stroke="#6fa0dc" stroke-width="2"/><rect x="20" y="2" width="11" height="28" fill="#fff" stroke="#6fa0dc" stroke-width="2"/><path d="M4,7H10M4,12H10M4,17H10M4,22H10M23,7H29M23,12H29M23,17H29M23,22H29" stroke="#b8c4f0" stroke-width="2"/><path d="M9,22 L14,17 L18,12 L26,8" stroke="#5aa05a" stroke-width="4" fill="none"/></svg>
<div style="left:1484.00px;top:262.00px;width:1px;height:34px;background:#c8c8c8"></div>
<svg style="position:absolute;left:1504.00px;top:262.00px" width="32" height="32" viewBox="0 0 32 32"><rect x="1" y="9" width="30" height="21" rx="2" fill="#333" stroke="#111" stroke-width="2"/><rect x="10" y="2" width="12" height="8" fill="#eee" stroke="#111" stroke-width="2"/><circle cx="16" cy="20" r="6" fill="#111" stroke="#666" stroke-width="1.5"/><rect x="14" y="17" width="3" height="3" fill="#fff"/></svg>
<div style="left:1552.00px;top:262.00px;width:1px;height:34px;background:#c8c8c8"></div>
<svg style="position:absolute;left:1572.00px;top:262.00px" width="32" height="32" viewBox="0 0 32 32"><rect x="1" y="1" width="22" height="29" fill="#f4f4f4" stroke="#444" stroke-width="2" stroke-dasharray="2 2"/><path d="M5,7H20M5,11H20" stroke="#ccc" stroke-width="2"/><rect x="5" y="15" width="15" height="8" fill="#5a9ad8"/><rect x="22" y="1" width="9" height="31" fill="#e8c040" stroke="#e07800" stroke-width="2"/></svg>
<svg style="position:absolute;left:1616.00px;top:273.00px" width="13" height="7" viewBox="0 0 13 7"><polygon points="0,0 13,0 6.5,7" fill="#000"/></svg>
<div style="left:1638.00px;top:262.00px;width:1px;height:34px;background:#c8c8c8"></div>
<svg style="position:absolute;left:1652.00px;top:266.00px" width="23" height="23" viewBox="0 0 23 23"><path d="M2,2 L21,21 M21,2 L2,21" stroke="#000" stroke-width="4.2" stroke-linecap="square"/></svg>
<svg style="position:absolute;left:1094.00px;top:316.00px" width="20" height="20" viewBox="0 0 20 20"><path d="M3,3 L17,17 M17,3 L3,17" stroke="#fff" stroke-width="4.5"/></svg>
<svg style="position:absolute;left:1711.00px;top:263.00px" width="32" height="32" viewBox="0 0 32 32"><path d="M21,8 C19,4 15,3 12,3 C6,3 3,8 3,13 C3,19 7,23 12,23 C15,23 18,22 20,19" stroke="#3c8cff" stroke-width="4.5" fill="none"/><path d="M3,13 C3,8 6,3 12,3" stroke="#7ab8ff" stroke-width="1.5" fill="none" stroke-dasharray="1.5 1.5"/><path d="M25,14 H21 L19,29 H15 M17,19 H26" stroke="#e018e0" stroke-width="3.5" fill="none"/></svg>
<svg style="position:absolute;left:3227.00px;top:262.00px" width="32" height="32" viewBox="0 0 32 32"><path d="M6,14 C6,6 20,2 26,9" stroke="#1a9a1a" stroke-width="5" fill="none"/><polygon points="22,3 30,12 20,13" fill="#1a9a1a"/><path d="M26,18 C26,26 12,30 6,23" stroke="#22c022" stroke-width="5" fill="none"/><polygon points="10,29 2,20 12,19" fill="#22c022"/></svg>
<div style="left:3274.00px;top:262.00px;width:1px;height:34px;background:#c8c8c8"></div>
<svg style="position:absolute;left:3294.00px;top:262.00px" width="32" height="32" viewBox="0 0 32 32"><path d="M1,1H13L17,5V22H1Z" fill="#f4f4f4" stroke="#bdbdbd" stroke-width="2"/><path d="M13,9H25L31,15V31H13Z" fill="#f4f4f4" stroke="#bdbdbd" stroke-width="2"/></svg>
<div style="left:3342.00px;top:262.00px;width:1px;height:34px;background:#c8c8c8"></div>
<svg style="position:absolute;left:3364.00px;top:262.00px" width="30" height="32" viewBox="0 0 30 32"><rect x="1" y="1" width="26" height="30" fill="#c8d4f8" stroke="#3a7ad0" stroke-width="2"/><rect x="5" y="21" width="19" height="5" fill="#3a8ae0"/><path d="M8,22 L24,5" stroke="#e0b040" stroke-width="6"/><path d="M7,25 L10,20" stroke="#555" stroke-width="3"/></svg>
<div style="left:3410.00px;top:262.00px;width:1px;height:34px;background:#c8c8c8"></div>
<svg style="position:absolute;left:3430.00px;top:262.00px" width="32" height="32" viewBox="0 0 32 32"><rect x="1" y="9" width="30" height="21" rx="2" fill="#333" stroke="#111" stroke-width="2"/><rect x="10" y="2" width="12" height="8" fill="#eee" stroke="#111" stroke-width="2"/><circle cx="16" cy="20" r="6" fill="#111" stroke="#666" stroke-width="1.5"/><rect x="14" y="17" width="3" height="3" fill="#fff"/></svg>
<div style="left:3470.00px;top:262.00px;width:1px;height:34px;background:#c8c8c8"></div>
<svg style="position:absolute;left:3484.00px;top:273.00px" width="20" height="10" viewBox="0 0 20 10"><polygon points="0,0 20,0 10.0,10" fill="#000"/></svg>
<svg style="position:absolute;left:3526.00px;top:266.00px" width="23" height="23" viewBox="0 0 23 23"><path d="M2,2 L21,21 M21,2 L2,21" stroke="#000" stroke-width="4.2" stroke-linecap="square"/></svg>
<svg style="position:absolute;left:711.00px;top:1779.00px" width="28" height="30" viewBox="0 0 28 30"><rect x="1" y="1" width="26" height="20" fill="#4a8ad0" stroke="#bbb" stroke-width="2"/><rect x="4" y="4" width="20" height="14" fill="#6aaae8"/><rect x="11" y="21" width="6" height="4" fill="#aaa"/><rect x="6" y="25" width="16" height="4" fill="#ccc" stroke="#999" stroke-width="1"/></svg>
<svg style="position:absolute;left:3432.00px;top:1778.00px" width="30" height="32" viewBox="0 0 30 32"><path d="M7,14V9 C7,2 21,2 21,9V14" stroke="#b8b8b8" stroke-width="5" fill="none"/><rect x="1" y="13" width="27" height="18" fill="#f0d060" stroke="#e09010" stroke-width="2"/><rect x="12" y="19" width="4" height="6" fill="#8a7a20"/></svg>
<svg style="position:absolute;left:3476.00px;top:1778.00px" width="30" height="32" viewBox="0 0 30 32"><polygon points="10,1 28,1 14,29 4,29 2,22" fill="#f0c030" stroke="#222" stroke-width="2"/><polygon points="4,29 14,29 16,23 5,21 2,24" fill="#f0c8d0" stroke="#6a4a20" stroke-width="2"/></svg>
<div style="left:3512.00px;top:1776.00px;width:1px;height:36px;background:#c8c8c8"></div>
<svg style="position:absolute;left:3526.00px;top:1783.00px" width="23" height="23" viewBox="0 0 23 23"><path d="M2,2 L21,21 M21,2 L2,21" stroke="#000" stroke-width="4.2" stroke-linecap="square"/></svg>
<svg style="position:absolute;left:643.00px;top:1808.00px" width="33" height="35" viewBox="0 0 33 35"><path d="M8,1H24L31,8V33H8Z" fill="#e8eeff" stroke="#4a8ad8" stroke-width="2"/><path d="M1,19 L10,14 L10,24 Z" fill="#9ab8e8"/><path d="M14,27H28" stroke="#4a8ad8" stroke-width="2"/><path d="M12,14L22,20L12,24" fill="#c0d0f0" stroke="#4a8ad8" stroke-width="1.5"/></svg>
<svg style="position:absolute;left:640.00px;top:2118.00px" width="33" height="35" viewBox="0 0 33 35"><path d="M8,1H24L31,8V33H8Z" fill="#e8eeff" stroke="#4a8ad8" stroke-width="2"/><path d="M1,19 L10,14 L10,24 Z" fill="#9ab8e8"/><path d="M14,27H28" stroke="#4a8ad8" stroke-width="2"/><path d="M12,14L22,20L12,24" fill="#c0d0f0" stroke="#4a8ad8" stroke-width="1.5"/></svg>
<svg style="position:absolute;left:118.00px;top:2192.00px" width="33" height="33" viewBox="0 0 33 33"><circle cx="16.5" cy="16.5" r="15" fill="#fff" stroke="#777" stroke-width="2"/><path d="M7,26 C10,18 14,12 22,8 L27,7 L22,13 L25,16 L18,17 L14,26 Z" fill="#e01010"/></svg>
<svg style="position:absolute;left:149.00px;top:346.00px" width="16" height="11" viewBox="0 0 16 11"><path d="M2,2 L8.0,8.0 L14,2" stroke="#bcbcbc" stroke-width="2.6" fill="none"/></svg>
<svg style="position:absolute;left:184.00px;top:336.00px" width="34" height="30" viewBox="0 0 34 30"><path d="M1,3 H12 L15,7 H27 V11" fill="#f2e08c" stroke="#a08418" stroke-width="2"/><path d="M1,3 V26 H28 L34,11 H10 L3,26" fill="#f0d070" stroke="#a08418" stroke-width="2.2"/><path d="M3,28 H30" stroke="#777" stroke-width="2"/></svg>
<svg style="position:absolute;left:224.00px;top:372.30px" width="48" height="31" viewBox="0 0 48 31"><path d="M1,3 H25 L31,9 V29 H1 Z" fill="#fff" stroke="#111" stroke-width="2.2"/><path d="M5,8h5M5,17h5" stroke="#a89020" stroke-width="2.5"/><path d="M7,11h15M7,20h17M7,23h15" stroke="#b0b0b0" stroke-width="2.5"/><path d="M19,11h5M20,17h5M9,26h4" stroke="#b01010" stroke-width="2"/><polygon points="26,6 36,2 46,2 44,10 34,12 28,10" fill="#e01818" stroke="#111" stroke-width="1.5"/><path d="M44,4 L33,27" stroke="#111" stroke-width="4"/><path d="M44,4 L33,27" stroke="#d8c860" stroke-width="2" stroke-dasharray="2 2"/></svg>
<svg style="position:absolute;left:224.00px;top:408.05px" width="48" height="31" viewBox="0 0 48 31"><path d="M1,3 H25 L31,9 V29 H1 Z" fill="#fff" stroke="#111" stroke-width="2.2"/><path d="M5,8h5M5,17h5" stroke="#a89020" stroke-width="2.5"/><path d="M7,11h15M7,20h17M7,23h15" stroke="#b0b0b0" stroke-width="2.5"/><path d="M19,11h5M20,17h5M9,26h4" stroke="#b01010" stroke-width="2"/><polygon points="26,6 36,2 46,2 44,10 34,12 28,10" fill="#e01818" stroke="#111" stroke-width="1.5"/><path d="M44,4 L33,27" stroke="#111" stroke-width="4"/><path d="M44,4 L33,27" stroke="#d8c860" stroke-width="2" stroke-dasharray="2 2"/></svg>
<svg style="position:absolute;left:224.00px;top:443.80px" width="48" height="31" viewBox="0 0 48 31"><path d="M1,3 H25 L31,9 V29 H1 Z" fill="#fff" stroke="#111" stroke-width="2.2"/><path d="M5,8h5M5,17h5" stroke="#a89020" stroke-width="2.5"/><path d="M7,11h15M7,20h17M7,23h15" stroke="#b0b0b0" stroke-width="2.5"/><path d="M19,11h5M20,17h5M9,26h4" stroke="#b01010" stroke-width="2"/><polygon points="26,6 36,2 46,2 44,10 34,12 28,10" fill="#e01818" stroke="#111" stroke-width="1.5"/><path d="M44,4 L33,27" stroke="#111" stroke-width="4"/><path d="M44,4 L33,27" stroke="#d8c860" stroke-width="2" stroke-dasharray="2 2"/></svg>
<svg style="position:absolute;left:224.00px;top:479.55px" width="48" height="31" viewBox="0 0 48 31"><path d="M1,3 H25 L31,9 V29 H1 Z" fill="#fff" stroke="#111" stroke-width="2.2"/><path d="M5,8h5M5,17h5" stroke="#a89020" stroke-width="2.5"/><path d="M7,11h15M7,20h17M7,23h15" stroke="#b0b0b0" stroke-width="2.5"/><path d="M19,11h5M20,17h5M9,26h4" stroke="#b01010" stroke-width="2"/><polygon points="26,6 36,2 46,2 44,10 34,12 28,10" fill="#e01818" stroke="#111" stroke-width="1.5"/><path d="M44,4 L33,27" stroke="#111" stroke-width="4"/><path d="M44,4 L33,27" stroke="#d8c860" stroke-width="2" stroke-dasharray="2 2"/></svg>
<svg style="position:absolute;left:224.00px;top:515.30px" width="48" height="31" viewBox="0 0 48 31"><path d="M1,3 H25 L31,9 V29 H1 Z" fill="#fff" stroke="#111" stroke-width="2.2"/><path d="M5,8h5M5,17h5" stroke="#a89020" stroke-width="2.5"/><path d="M7,11h15M7,20h17M7,23h15" stroke="#b0b0b0" stroke-width="2.5"/><path d="M19,11h5M20,17h5M9,26h4" stroke="#b01010" stroke-width="2"/></svg>
<svg style="position:absolute;left:224.00px;top:551.05px" width="48" height="31" viewBox="0 0 48 31"><path d="M1,3 H25 L31,9 V29 H1 Z" fill="#fff" stroke="#111" stroke-width="2.2"/><path d="M5,8h5M5,17h5" stroke="#a89020" stroke-width="2.5"/><path d="M7,11h15M7,20h17M7,23h15" stroke="#b0b0b0" stroke-width="2.5"/><path d="M19,11h5M20,17h5M9,26h4" stroke="#b01010" stroke-width="2"/></svg>
<svg style="position:absolute;left:224.00px;top:586.80px" width="48" height="31" viewBox="0 0 48 31"><path d="M1,3 H25 L31,9 V29 H1 Z" fill="#fff" stroke="#111" stroke-width="2.2"/><path d="M5,8h5M5,17h5" stroke="#a89020" stroke-width="2.5"/><path d="M7,11h15M7,20h17M7,23h15" stroke="#b0b0b0" stroke-width="2.5"/><path d="M19,11h5M20,17h5M9,26h4" stroke="#b01010" stroke-width="2"/><polygon points="26,6 36,2 46,2 44,10 34,12 28,10" fill="#e01818" stroke="#111" stroke-width="1.5"/><path d="M44,4 L33,27" stroke="#111" stroke-width="4"/><path d="M44,4 L33,27" stroke="#d8c860" stroke-width="2" stroke-dasharray="2 2"/></svg>
<svg style="position:absolute;left:224.00px;top:622.55px" width="48" height="31" viewBox="0 0 48 31"><path d="M1,3 H25 L31,9 V29 H1 Z" fill="#fff" stroke="#111" stroke-width="2.2"/><path d="M5,8h5M5,17h5" stroke="#a89020" stroke-width="2.5"/><path d="M7,11h15M7,20h17M7,23h15" stroke="#b0b0b0" stroke-width="2.5"/><path d="M19,11h5M20,17h5M9,26h4" stroke="#b01010" stroke-width="2"/></svg>
<div style="left:118px;top:1117px;width:534px;height:642px;overflow:hidden">
<div style="left:136.00px;top:530.00px;width:132px;height:31px;background:#2f4e7c"></div>
<div class="s" style="left:98.6px;top:10.14px;font-size:23px;line-height:23px;color:#000;letter-spacing:1.331px;">Imports</div>
<div class="s" style="left:98.6px;top:44.14px;font-size:23px;line-height:23px;color:#000;letter-spacing:1.147px;">Exports</div>
<div class="s" style="left:138px;top:77.54px;font-size:23px;line-height:23px;color:#ff00ff;letter-spacing:0.509px;">_DllMain@12</div>
<div class="s" style="left:179px;top:109.74px;font-size:23px;line-height:23px;color:#000;letter-spacing:1.461px;">param_1</div>
<div class="s" style="left:138px;top:141.74px;font-size:23px;line-height:23px;color:#ff00ff;letter-spacing:1.574px;">entry</div>
<div class="s" style="left:179px;top:173.44px;font-size:23px;line-height:23px;color:#000;letter-spacing:1.461px;">param_1</div>
<div class="s" style="left:179px;top:205.44px;font-size:23px;line-height:23px;color:#000;letter-spacing:1.461px;">param_2</div>
<div class="s" style="left:179px;top:237.54px;font-size:23px;line-height:23px;color:#000;letter-spacing:1.461px;">param_3</div>
<div class="s" style="left:138px;top:268.74px;font-size:23px;line-height:23px;color:#ff00ff;letter-spacing:1.181px;">winampGetGeneralPurposePlugin</div>
<div class="s" style="left:98.6px;top:301.64px;font-size:23px;line-height:23px;color:#000;letter-spacing:0.476px;">Functions</div>
<div class="s" style="left:138px;top:335.64px;font-size:23px;line-height:23px;color:#000;letter-spacing:0.690px;">_</div>
<div class="s" style="left:138px;top:369.14px;font-size:23px;line-height:23px;color:#000;letter-spacing:1.322px;">`eh_vector_</div>
<div class="s" style="left:138px;top:403.74px;font-size:23px;line-height:23px;color:#000;letter-spacing:0.553px;">Catch_All@07</div>
<div class="s" style="left:138px;top:436.44px;font-size:23px;line-height:23px;color:#ff00ff;letter-spacing:1.574px;">entry</div>
<div class="s" style="left:138px;top:468.54px;font-size:23px;line-height:23px;color:#000;letter-spacing:0.690px;">F</div>
<div class="s" style="left:138px;top:502.14px;font-size:23px;line-height:23px;color:#0000ee;letter-spacing:0.848px;">get_some_float_value</div>
<div class="s" style="left:138px;top:534.14px;font-size:23px;line-height:23px;color:#fff;letter-spacing:1.743px;">interpreter</div>
<div class="s" style="left:138px;top:566.14px;font-size:23px;line-height:23px;color:#000;letter-spacing:1.157px;">Unwind@076</div>
<div class="s" style="left:138px;top:599.94px;font-size:23px;line-height:23px;color:#0000ee;letter-spacing:0.703px;">what_is_this</div>
<div class="s" style="left:138px;top:632.14px;font-size:23px;line-height:23px;color:#ff00ff;letter-spacing:1.181px;">winampGetGeneralPurposePlugin</div>
<svg style="position:absolute;left:14.00px;top:10.50px" width="11" height="16" viewBox="0 0 11 16"><path d="M2,2 L8.0,8.0 L2,14" stroke="#bcbcbc" stroke-width="2.6" fill="none"/></svg>
<svg style="position:absolute;left:44.00px;top:5.00px" width="48" height="30" viewBox="0 0 48 30"><path d="M1,3 H13 L16,7 H30 V28 H1 Z" fill="#f2e08c" stroke="#a08418" stroke-width="2"/><rect x="3" y="11" width="26" height="16" fill="#ecd470"/><path d="M3,29 H30" stroke="#888" stroke-width="2"/><polygon points="30,28 38,18 46,28" fill="#2e8a3e"/></svg>
<svg style="position:absolute;left:9.00px;top:50.00px" width="16" height="11" viewBox="0 0 16 11"><path d="M2,2 L8.0,8.0 L14,2" stroke="#bcbcbc" stroke-width="2.6" fill="none"/></svg>
<svg style="position:absolute;left:44.00px;top:40.00px" width="42" height="30" viewBox="0 0 42 30"><path d="M1,3 H12 L15,7 H27 V11" fill="#f2e08c" stroke="#a08418" stroke-width="2"/><path d="M1,3 V26 H28 L34,11 H10 L3,26" fill="#f0d070" stroke="#a08418" stroke-width="2.2"/><path d="M3,28 H30" stroke="#777" stroke-width="2"/></svg>
<svg style="position:absolute;left:49.00px;top:83.40px" width="16" height="11" viewBox="0 0 16 11"><path d="M2,2 L8.0,8.0 L14,2" stroke="#bcbcbc" stroke-width="2.6" fill="none"/></svg>
<svg style="position:absolute;left:90.00px;top:75.40px" width="16" height="26" viewBox="0 0 16 26"><path d="M12,3 H8 L6,22 H2" stroke="#c010c0" stroke-width="3.5" fill="none"/><path d="M3,10 H13" stroke="#c010c0" stroke-width="3"/><path d="M11,2 H15" stroke="#ff40ff" stroke-width="2"/></svg>
<svg style="position:absolute;left:122.00px;top:106.60px" width="34" height="24" viewBox="0 0 34 24"><path d="M3,22 V2 H9 Q13,2 13,7 Q13,12 9,12 H3" stroke="#e010e0" stroke-width="3.2" fill="none"/><polygon points="22,2 30,10 22,18 14,10" fill="#18e818"/><polygon points="14,10 22,18 22,22 14,14" fill="#3070a0"/><polygon points="30,10 22,18 22,22 30,14" fill="#000"/></svg>
<svg style="position:absolute;left:49.00px;top:147.60px" width="16" height="11" viewBox="0 0 16 11"><path d="M2,2 L8.0,8.0 L14,2" stroke="#bcbcbc" stroke-width="2.6" fill="none"/></svg>
<svg style="position:absolute;left:90.00px;top:139.60px" width="16" height="26" viewBox="0 0 16 26"><path d="M12,3 H8 L6,22 H2" stroke="#c010c0" stroke-width="3.5" fill="none"/><path d="M3,10 H13" stroke="#c010c0" stroke-width="3"/><path d="M11,2 H15" stroke="#ff40ff" stroke-width="2"/></svg>
<svg style="position:absolute;left:122.00px;top:170.30px" width="34" height="24" viewBox="0 0 34 24"><path d="M3,22 V2 H9 Q13,2 13,7 Q13,12 9,12 H3" stroke="#e010e0" stroke-width="3.2" fill="none"/><polygon points="22,2 30,10 22,18 14,10" fill="#18e818"/><polygon points="14,10 22,18 22,22 14,14" fill="#3070a0"/><polygon points="30,10 22,18 22,22 30,14" fill="#000"/></svg>
<svg style="position:absolute;left:122.00px;top:202.30px" width="34" height="24" viewBox="0 0 34 24"><path d="M3,22 V2 H9 Q13,2 13,7 Q13,12 9,12 H3" stroke="#e010e0" stroke-width="3.2" fill="none"/><polygon points="22,2 30,10 22,18 14,10" fill="#18e818"/><polygon points="14,10 22,18 22,22 14,14" fill="#3070a0"/><polygon points="30,10 22,18 22,22 30,14" fill="#000"/></svg>
<svg style="position:absolute;left:122.00px;top:234.40px" width="34" height="24" viewBox="0 0 34 24"><path d="M3,22 V2 H9 Q13,2 13,7 Q13,12 9,12 H3" stroke="#e010e0" stroke-width="3.2" fill="none"/><polygon points="22,2 30,10 22,18 14,10" fill="#18e818"/><polygon points="14,10 22,18 22,22 14,14" fill="#3070a0"/><polygon points="30,10 22,18 22,22 30,14" fill="#000"/></svg>
<svg style="position:absolute;left:90.00px;top:266.60px" width="16" height="26" viewBox="0 0 16 26"><path d="M12,3 H8 L6,22 H2" stroke="#c010c0" stroke-width="3.5" fill="none"/><path d="M3,10 H13" stroke="#c010c0" stroke-width="3"/><path d="M11,2 H15" stroke="#ff40ff" stroke-width="2"/></svg>
<svg style="position:absolute;left:9.00px;top:307.50px" width="16" height="11" viewBox="0 0 16 11"><path d="M2,2 L8.0,8.0 L14,2" stroke="#bcbcbc" stroke-width="2.6" fill="none"/></svg>
<svg style="position:absolute;left:44.00px;top:294.50px" width="34" height="30" viewBox="0 0 34 30"><path d="M1,3 H12 L15,7 H27 V11" fill="#f2e08c" stroke="#a08418" stroke-width="2"/><path d="M1,3 V26 H28 L34,11 H10 L3,26" fill="#f0d070" stroke="#a08418" stroke-width="2.2"/><path d="M3,28 H30" stroke="#777" stroke-width="2"/></svg>
<svg style="position:absolute;left:70.00px;top:294.50px" width="22" height="28" viewBox="0 0 22 28"><rect x="2" y="4" width="14" height="22" fill="#fff" stroke="#aaa" stroke-width="2"/><rect x="0" y="1" width="14" height="21" fill="#fff" stroke="#777" stroke-width="2"/><path d="M10,5 H7 L5,18 M4,10 H10" stroke="#e01010" stroke-width="2.2" fill="none"/></svg>
<svg style="position:absolute;left:55.00px;top:336.00px" width="11" height="16" viewBox="0 0 11 16"><path d="M2,2 L8.0,8.0 L2,14" stroke="#bcbcbc" stroke-width="2.6" fill="none"/></svg>
<svg style="position:absolute;left:84.00px;top:330.50px" width="48" height="30" viewBox="0 0 48 30"><path d="M1,3 H13 L16,7 H30 V28 H1 Z" fill="#f2e08c" stroke="#a08418" stroke-width="2"/><rect x="3" y="11" width="26" height="16" fill="#ecd470"/><path d="M3,29 H30" stroke="#888" stroke-width="2"/><path d="M29,10 Q34,4 39,10" stroke="#222" stroke-width="2" fill="#eee"/><polygon points="26,12 46,12 43,26 29,26" fill="#7a6040" stroke="#4a3a20" stroke-width="1.5"/><path d="M31,17h10M31,21h10" stroke="#c8b880" stroke-width="2"/></svg>
<svg style="position:absolute;left:55.00px;top:369.50px" width="11" height="16" viewBox="0 0 11 16"><path d="M2,2 L8.0,8.0 L2,14" stroke="#bcbcbc" stroke-width="2.6" fill="none"/></svg>
<svg style="position:absolute;left:84.00px;top:364.00px" width="48" height="30" viewBox="0 0 48 30"><path d="M1,3 H13 L16,7 H30 V28 H1 Z" fill="#f2e08c" stroke="#a08418" stroke-width="2"/><rect x="3" y="11" width="26" height="16" fill="#ecd470"/><path d="M3,29 H30" stroke="#888" stroke-width="2"/><path d="M29,10 Q34,4 39,10" stroke="#222" stroke-width="2" fill="#eee"/><polygon points="26,12 46,12 43,26 29,26" fill="#7a6040" stroke="#4a3a20" stroke-width="1.5"/><path d="M31,17h10M31,21h10" stroke="#c8b880" stroke-width="2"/></svg>
<svg style="position:absolute;left:55.00px;top:404.10px" width="11" height="16" viewBox="0 0 11 16"><path d="M2,2 L8.0,8.0 L2,14" stroke="#bcbcbc" stroke-width="2.6" fill="none"/></svg>
<svg style="position:absolute;left:84.00px;top:398.60px" width="48" height="30" viewBox="0 0 48 30"><path d="M1,3 H13 L16,7 H30 V28 H1 Z" fill="#f2e08c" stroke="#a08418" stroke-width="2"/><rect x="3" y="11" width="26" height="16" fill="#ecd470"/><path d="M3,29 H30" stroke="#888" stroke-width="2"/><path d="M29,10 Q34,4 39,10" stroke="#222" stroke-width="2" fill="#eee"/><polygon points="26,12 46,12 43,26 29,26" fill="#7a6040" stroke="#4a3a20" stroke-width="1.5"/><path d="M31,17h10M31,21h10" stroke="#c8b880" stroke-width="2"/></svg>
<svg style="position:absolute;left:55.00px;top:436.80px" width="11" height="16" viewBox="0 0 11 16"><path d="M2,2 L8.0,8.0 L2,14" stroke="#bcbcbc" stroke-width="2.6" fill="none"/></svg>
<svg style="position:absolute;left:90.00px;top:434.30px" width="16" height="26" viewBox="0 0 16 26"><path d="M12,3 H8 L6,22 H2" stroke="#c010c0" stroke-width="3.5" fill="none"/><path d="M3,10 H13" stroke="#c010c0" stroke-width="3"/><path d="M11,2 H15" stroke="#ff40ff" stroke-width="2"/></svg>
<svg style="position:absolute;left:55.00px;top:468.90px" width="11" height="16" viewBox="0 0 11 16"><path d="M2,2 L8.0,8.0 L2,14" stroke="#bcbcbc" stroke-width="2.6" fill="none"/></svg>
<svg style="position:absolute;left:84.00px;top:463.40px" width="48" height="30" viewBox="0 0 48 30"><path d="M1,3 H13 L16,7 H30 V28 H1 Z" fill="#f2e08c" stroke="#a08418" stroke-width="2"/><rect x="3" y="11" width="26" height="16" fill="#ecd470"/><path d="M3,29 H30" stroke="#888" stroke-width="2"/><path d="M29,10 Q34,4 39,10" stroke="#222" stroke-width="2" fill="#eee"/><polygon points="26,12 46,12 43,26 29,26" fill="#7a6040" stroke="#4a3a20" stroke-width="1.5"/><path d="M31,17h10M31,21h10" stroke="#c8b880" stroke-width="2"/></svg>
<svg style="position:absolute;left:55.00px;top:502.50px" width="11" height="16" viewBox="0 0 11 16"><path d="M2,2 L8.0,8.0 L2,14" stroke="#bcbcbc" stroke-width="2.6" fill="none"/></svg>
<svg style="position:absolute;left:90.00px;top:500.00px" width="16" height="26" viewBox="0 0 16 26"><path d="M12,3 H8 L6,22 H2" stroke="#c010c0" stroke-width="3.5" fill="none"/><path d="M3,10 H13" stroke="#c010c0" stroke-width="3"/><path d="M11,2 H15" stroke="#ff40ff" stroke-width="2"/></svg>
<svg style="position:absolute;left:55.00px;top:534.50px" width="11" height="16" viewBox="0 0 11 16"><path d="M2,2 L8.0,8.0 L2,14" stroke="#bcbcbc" stroke-width="2.6" fill="none"/></svg>
<svg style="position:absolute;left:90.00px;top:532.00px" width="16" height="26" viewBox="0 0 16 26"><path d="M12,3 H8 L6,22 H2" stroke="#c010c0" stroke-width="3.5" fill="none"/><path d="M3,10 H13" stroke="#c010c0" stroke-width="3"/><path d="M11,2 H15" stroke="#ff40ff" stroke-width="2"/></svg>
<svg style="position:absolute;left:55.00px;top:566.50px" width="11" height="16" viewBox="0 0 11 16"><path d="M2,2 L8.0,8.0 L2,14" stroke="#bcbcbc" stroke-width="2.6" fill="none"/></svg>
<svg style="position:absolute;left:84.00px;top:561.00px" width="48" height="30" viewBox="0 0 48 30"><path d="M1,3 H13 L16,7 H30 V28 H1 Z" fill="#f2e08c" stroke="#a08418" stroke-width="2"/><rect x="3" y="11" width="26" height="16" fill="#ecd470"/><path d="M3,29 H30" stroke="#888" stroke-width="2"/><path d="M29,10 Q34,4 39,10" stroke="#222" stroke-width="2" fill="#eee"/><polygon points="26,12 46,12 43,26 29,26" fill="#7a6040" stroke="#4a3a20" stroke-width="1.5"/><path d="M31,17h10M31,21h10" stroke="#c8b880" stroke-width="2"/></svg>
<svg style="position:absolute;left:55.00px;top:600.30px" width="11" height="16" viewBox="0 0 11 16"><path d="M2,2 L8.0,8.0 L2,14" stroke="#bcbcbc" stroke-width="2.6" fill="none"/></svg>
<svg style="position:absolute;left:90.00px;top:597.80px" width="16" height="26" viewBox="0 0 16 26"><path d="M12,3 H8 L6,22 H2" stroke="#c010c0" stroke-width="3.5" fill="none"/><path d="M3,10 H13" stroke="#c010c0" stroke-width="3"/><path d="M11,2 H15" stroke="#ff40ff" stroke-width="2"/></svg>
<svg style="position:absolute;left:55.00px;top:632.50px" width="11" height="16" viewBox="0 0 11 16"><path d="M2,2 L8.0,8.0 L2,14" stroke="#bcbcbc" stroke-width="2.6" fill="none"/></svg>
<svg style="position:absolute;left:90.00px;top:630.00px" width="16" height="26" viewBox="0 0 16 26"><path d="M12,3 H8 L6,22 H2" stroke="#c010c0" stroke-width="3.5" fill="none"/><path d="M3,10 H13" stroke="#c010c0" stroke-width="3"/><path d="M11,2 H15" stroke="#ff40ff" stroke-width="2"/></svg>
</div>
<div style="left:123px;top:1979px;width:526px;height:119px;overflow:hidden">
<svg style="position:absolute;left:0.00px;top:6.00px" width="50" height="32" viewBox="0 0 50 32"><rect x="3" y="24" width="44" height="4" fill="#8a1a10"/><path d="M8,28V31M40,28V31" stroke="#8a1a10" stroke-width="3"/><rect x="9" y="8" width="6" height="16" fill="#d07810" stroke="#111" stroke-width="1.5"/><rect x="22" y="2" width="7" height="22" fill="#2040d0" stroke="#111" stroke-width="1.5"/><rect x="30" y="5" width="7" height="19" fill="#30a040" stroke="#111" stroke-width="1.5"/></svg>
<svg style="position:absolute;left:11.00px;top:41.00px" width="11" height="16" viewBox="0 0 11 16"><path d="M2,2 L8.0,8.0 L2,14" stroke="#bcbcbc" stroke-width="2.6" fill="none"/></svg>
<svg style="position:absolute;left:11.00px;top:77.00px" width="11" height="16" viewBox="0 0 11 16"><path d="M2,2 L8.0,8.0 L2,14" stroke="#bcbcbc" stroke-width="2.6" fill="none"/></svg>
<svg style="position:absolute;left:43.00px;top:38.00px" width="26" height="34" viewBox="0 0 26 34"><path d="M3,5 L9,1 H24 V27 L18,32 H3 Z" fill="#e07a18" stroke="#8a4a08" stroke-width="1.5"/><path d="M11,8h9M11,14h9M11,20h9" stroke="#f8e0a0" stroke-width="2.5"/></svg>
<svg style="position:absolute;left:43.00px;top:74.00px" width="26" height="34" viewBox="0 0 26 34"><path d="M3,5 L9,1 H24 V27 L18,32 H3 Z" fill="#f05050" stroke="#a02020" stroke-width="1.5"/><path d="M11,8h9M11,14h9M11,20h9" stroke="#f8e0a0" stroke-width="2.5"/></svg>
<svg style="position:absolute;left:71.00px;top:82.00px" width="20" height="20" viewBox="0 0 20 20"><circle cx="10" cy="10" r="9" fill="#3a6ab0"/><path d="M5,10 L9,14 L15,6" stroke="#fff" stroke-width="2.5" fill="none"/></svg>
<svg style="position:absolute;left:43.00px;top:112.00px" width="26" height="20" viewBox="0 0 26 20"><path d="M3,5 L9,1 H24 V20 H3 Z" fill="#fff" stroke="#30a040" stroke-width="2"/></svg>
</div>
<div style="left:885px;top:358px;width:737px;height:1362px;overflow:hidden">
<div style="left:1.00px;top:42.00px;width:740px;height:64px;background:#9bfd98"></div>
<div style="left:1.00px;top:170.00px;width:740px;height:96px;background:#9bfd98"></div>
<div style="left:1.00px;top:330.00px;width:740px;height:128px;background:#9bfd98"></div>
<div style="left:1.00px;top:618.00px;width:740px;height:64px;background:#9bfd98"></div>
<div style="left:1.00px;top:682.00px;width:740px;height:64px;background:#8df58f"></div>
<div class="m" style="left:114px;top:-18.38px;">076750fd</div>
<div class="m" style="left:240px;top:-18.38px;"><span style="color:#0000ff">8d bc 24</span></div>
<div class="m" style="left:460px;top:-18.38px;"><span style="color:#000080">LEA</span></div>
<div style="left:620px;top:0;width:117px;height:1362px;overflow:hidden">
<div class="m" style="left:0px;top:-18.38px;"><span style="color:#808000">EDI</span>,[<span style="color:#808000">ESP</span></div>
</div>
<div class="m" style="left:240px;top:16.62px;"><span style="color:#0000ff">ec 01 00 00</span></div>
<div class="m" style="left:114px;top:48.62px;">07675104</div>
<div class="m" style="left:240px;top:48.62px;"><span style="color:#0000ff">a5</span></div>
<div class="m" style="left:460px;top:48.62px;"><span style="color:#000080">MOVSD</span></div>
<div style="left:620px;top:0;width:117px;height:1362px;overflow:hidden">
<div class="m" style="left:0px;top:48.62px;"><span style="color:#808000">ES</span>:<span style="color:#808000">EDI</span>,<span style="color:#808000">ES</span>:<span style="color:#808000">ESI</span></div>
</div>
<div class="m" style="left:114px;top:80.62px;">07675105</div>
<div class="m" style="left:240px;top:80.62px;"><span style="color:#0000ff">a5</span></div>
<div class="m" style="left:460px;top:80.62px;"><span style="color:#000080">MOVSD</span></div>
<div style="left:620px;top:0;width:117px;height:1362px;overflow:hidden">
<div class="m" style="left:0px;top:80.62px;"><span style="color:#808000">ES</span>:<span style="color:#808000">EDI</span>,<span style="color:#808000">ES</span>:<span style="color:#808000">ESI</span></div>
</div>
<div class="m" style="left:114px;top:112.62px;">07675106</div>
<div class="m" style="left:240px;top:112.62px;"><span style="color:#0000ff">8d 84 24</span></div>
<div class="m" style="left:460px;top:112.62px;"><span style="color:#000080">LEA</span></div>
<div style="left:620px;top:0;width:117px;height:1362px;overflow:hidden">
<div class="m" style="left:0px;top:112.62px;"><span style="color:#808000">EAX</span>,[<span style="color:#808000">ESP</span> + <span style="color:#008000">0x438</span>]</div>
</div>
<div class="m" style="left:240px;top:144.62px;"><span style="color:#0000ff">38 04 00 00</span></div>
<div class="m" style="left:114px;top:176.62px;">0767510d</div>
<div class="m" style="left:240px;top:176.62px;"><span style="color:#0000ff">a5</span></div>
<div class="m" style="left:460px;top:176.62px;"><span style="color:#000080">MOVSD</span></div>
<div style="left:620px;top:0;width:117px;height:1362px;overflow:hidden">
<div class="m" style="left:0px;top:176.62px;"><span style="color:#808000">ES</span>:<span style="color:#808000">EDI</span>,<span style="color:#808000">ES</span>:<span style="color:#808000">ESI</span></div>
</div>
<div class="m" style="left:114px;top:208.62px;">0767510e</div>
<div class="m" style="left:240px;top:208.62px;"><span style="color:#0000ff">e8 b8 cd</span></div>
<div class="m" style="left:460px;top:208.62px;"><span style="color:#000080">CALL</span></div>
<div style="left:620px;top:0;width:117px;height:1362px;overflow:hidden">
<div class="m" style="left:0px;top:208.62px;"><span style="color:#0000ff">get_some_float_value</span></div>
</div>
<div class="m" style="left:240px;top:240.62px;"><span style="color:#0000ff">ff ff</span></div>
<div class="m" style="left:114px;top:272.62px;">07675113</div>
<div class="m" style="left:240px;top:272.62px;"><span style="color:#0000ff">8d 84 24</span></div>
<div class="m" style="left:460px;top:272.62px;"><span style="color:#000080">LEA</span></div>
<div style="left:620px;top:0;width:117px;height:1362px;overflow:hidden">
<div class="m" style="left:0px;top:272.62px;"><span style="color:#808000">EAX</span>,[<span style="color:#808000">ESP</span> + <span style="color:#008000">0x468</span>]</div>
</div>
<div class="m" style="left:240px;top:304.62px;"><span style="color:#0000ff">68 04 00 00</span></div>
<div class="m" style="left:114px;top:336.62px;">0767511a</div>
<div class="m" style="left:240px;top:336.62px;"><span style="color:#0000ff">dd 5c 24 28</span></div>
<div class="m" style="left:460px;top:336.62px;"><span style="color:#000080">FSTP</span></div>
<div style="left:620px;top:0;width:117px;height:1362px;overflow:hidden">
<div class="m" style="left:0px;top:336.62px;">qword pt</div>
</div>
<div class="m" style="left:114px;top:368.62px;">0767511e</div>
<div class="m" style="left:240px;top:368.62px;"><span style="color:#0000ff">e8 a8 cd</span></div>
<div class="m" style="left:460px;top:368.62px;"><span style="color:#000080">CALL</span></div>
<div style="left:620px;top:0;width:117px;height:1362px;overflow:hidden">
<div class="m" style="left:0px;top:368.62px;"><span style="color:#0000ff">get_some_float_value</span></div>
</div>
<div class="m" style="left:240px;top:400.62px;"><span style="color:#0000ff">ff ff</span></div>
<div class="m" style="left:114px;top:432.62px;">07675123</div>
<div class="m" style="left:240px;top:432.62px;"><span style="color:#0000ff">dc 4c 24 28</span></div>
<div class="m" style="left:460px;top:432.62px;"><span style="color:#000080">FMUL</span></div>
<div style="left:620px;top:0;width:117px;height:1362px;overflow:hidden">
<div class="m" style="left:0px;top:432.62px;">qword pt</div>
</div>
<div class="m" style="left:114px;top:464.62px;">07675127</div>
<div class="m" style="left:240px;top:464.62px;"><span style="color:#0000ff">51</span></div>
<div class="m" style="left:460px;top:464.62px;"><span style="color:#000080">PUSH</span></div>
<div style="left:620px;top:0;width:117px;height:1362px;overflow:hidden">
<div class="m" style="left:0px;top:464.62px;"><span style="color:#808000">ECX</span></div>
</div>
<div class="m" style="left:114px;top:496.62px;">07675128</div>
<div class="m" style="left:240px;top:496.62px;"><span style="color:#0000ff">51</span></div>
<div class="m" style="left:460px;top:496.62px;"><span style="color:#000080">PUSH</span></div>
<div style="left:620px;top:0;width:117px;height:1362px;overflow:hidden">
<div class="m" style="left:0px;top:496.62px;"><span style="color:#808000">ECX</span></div>
</div>
<div class="m" style="left:114px;top:528.62px;">07675129</div>
<div class="m" style="left:240px;top:528.62px;"><span style="color:#0000ff">8d 84 24</span></div>
<div class="m" style="left:460px;top:528.62px;"><span style="color:#000080">LEA</span></div>
<div style="left:620px;top:0;width:117px;height:1362px;overflow:hidden">
<div class="m" style="left:0px;top:528.62px;"><span style="color:#808000">EAX</span>,[<span style="color:#808000">ESP</span> + <span style="color:#008000">0x1f4</span>]</div>
</div>
<div class="m" style="left:240px;top:560.62px;"><span style="color:#0000ff">f4 01 00 00</span></div>
<div class="m" style="left:114px;top:592.62px;">07675130</div>
<div class="m" style="left:240px;top:592.62px;"><span style="color:#0000ff">dd 1c 24</span></div>
<div class="m" style="left:460px;top:592.62px;"><span style="color:#000080">FSTP</span></div>
<div style="left:620px;top:0;width:117px;height:1362px;overflow:hidden">
<div class="m" style="left:0px;top:592.62px;">qword pt</div>
</div>
<div class="m" style="left:114px;top:624.62px;">07675133</div>
<div class="m" style="left:240px;top:624.62px;"><span style="color:#0000ff">e8 f9 c7</span></div>
<div class="m" style="left:460px;top:624.62px;"><span style="color:#000080">CALL</span></div>
<div style="left:620px;top:0;width:117px;height:1362px;overflow:hidden">
<div class="m" style="left:0px;top:624.62px;"><span style="color:#0000ff">FUN_07671931</span></div>
</div>
<div class="m" style="left:240px;top:656.62px;"><span style="color:#0000ff">ff ff</span></div>
<div class="m" style="left:114px;top:688.62px;">07675138</div>
<div class="m" style="left:240px;top:688.62px;"><span style="color:#0000ff">8d b4 24</span></div>
<div class="m" style="left:460px;top:688.62px;"><span style="color:#000080">LEA</span></div>
<div style="left:620px;top:0;width:117px;height:1362px;overflow:hidden">
<div class="m" style="left:0px;top:688.62px;"><span style="color:#808000">ESI</span>,[<span style="color:#808000">ESP</span> + <span style="color:#008000">0x1f4</span>]</div>
</div>
<div class="m" style="left:240px;top:720.62px;"><span style="color:#0000ff">f4 01 00 00</span></div>
<div class="m" style="left:114px;top:752.62px;">0767513f</div>
<div class="m" style="left:240px;top:752.62px;"><span style="color:#0000ff">e9 1c f9</span></div>
<div class="m" style="left:460px;top:752.62px;"><span style="color:#000080">JMP</span></div>
<div style="left:620px;top:0;width:117px;height:1362px;overflow:hidden">
<div class="m" style="left:0px;top:752.62px;"><span style="color:#0000ff">LAB_07674a60</span></div>
</div>
<div class="m" style="left:240px;top:784.62px;"><span style="color:#0000ff">ff ff</span></div>
<div class="m" style="left:114px;top:880.62px;">07675144</div>
<div class="m" style="left:240px;top:880.62px;"><span style="color:#0000ff">8d 9c 24</span></div>
<div class="m" style="left:460px;top:880.62px;"><span style="color:#000080">LEA</span></div>
<div style="left:620px;top:0;width:117px;height:1362px;overflow:hidden">
<div class="m" style="left:0px;top:880.62px;"><span style="color:#808000">EBX</span>,[<span style="color:#808000">ESP</span> + <span style="color:#008000">0x808</span>]</div>
</div>
<div class="m" style="left:240px;top:912.62px;"><span style="color:#0000ff">08 08 00 00</span></div>
<div class="m" style="left:114px;top:944.62px;">0767514b</div>
<div class="m" style="left:240px;top:944.62px;"><span style="color:#0000ff">e8 99 dc</span></div>
<div class="m" style="left:460px;top:944.62px;"><span style="color:#000080">CALL</span></div>
<div style="left:620px;top:0;width:117px;height:1362px;overflow:hidden">
<div class="m" style="left:0px;top:944.62px;"><span style="color:#0000ff">what_is_this</span></div>
</div>
<div class="m" style="left:240px;top:976.62px;"><span style="color:#0000ff">ff ff</span></div>
<div class="m" style="left:114px;top:1008.62px;">07675150</div>
<div class="m" style="left:240px;top:1008.62px;"><span style="color:#0000ff">d9 ee</span></div>
<div class="m" style="left:460px;top:1008.62px;"><span style="color:#000080">FLDZ</span></div>
<div class="m" style="left:114px;top:1040.62px;">07675152</div>
<div class="m" style="left:240px;top:1040.62px;"><span style="color:#0000ff">6a 05</span></div>
<div class="m" style="left:460px;top:1040.62px;"><span style="color:#000080">PUSH</span></div>
<div style="left:620px;top:0;width:117px;height:1362px;overflow:hidden">
<div class="m" style="left:0px;top:1040.62px;"><span style="color:#008000">0x5</span></div>
</div>
<div class="m" style="left:114px;top:1072.62px;">07675154</div>
<div class="m" style="left:240px;top:1072.62px;"><span style="color:#0000ff">dd 9c 24</span></div>
<div class="m" style="left:460px;top:1072.62px;"><span style="color:#000080">FSTP</span></div>
<div style="left:620px;top:0;width:117px;height:1362px;overflow:hidden">
<div class="m" style="left:0px;top:1072.62px;">qword pt</div>
</div>
<div class="m" style="left:240px;top:1104.62px;"><span style="color:#0000ff">20 01 00 00</span></div>
<div class="m" style="left:114px;top:1136.62px;">0767515b</div>
<div class="m" style="left:240px;top:1136.62px;"><span style="color:#0000ff">5b</span></div>
<div class="m" style="left:460px;top:1136.62px;"><span style="color:#000080">POP</span></div>
<div style="left:620px;top:0;width:117px;height:1362px;overflow:hidden">
<div class="m" style="left:0px;top:1136.62px;"><span style="color:#808000">EBX</span></div>
</div>
<div class="m" style="left:114px;top:1168.62px;">0767515c</div>
<div class="m" style="left:240px;top:1168.62px;"><span style="color:#0000ff">8b cb</span></div>
<div class="m" style="left:460px;top:1168.62px;"><span style="color:#000080">MOV</span></div>
<div style="left:620px;top:0;width:117px;height:1362px;overflow:hidden">
<div class="m" style="left:0px;top:1168.62px;"><span style="color:#808000">ECX</span>,<span style="color:#808000">EBX</span></div>
</div>
<div class="m" style="left:114px;top:1200.62px;">0767515e</div>
<div class="m" style="left:240px;top:1200.62px;"><span style="color:#0000ff">8b f0</span></div>
<div class="m" style="left:460px;top:1200.62px;"><span style="color:#000080">MOV</span></div>
<div style="left:620px;top:0;width:117px;height:1362px;overflow:hidden">
<div class="m" style="left:0px;top:1200.62px;"><span style="color:#808000">ESI</span>,<span style="color:#808000">EAX</span></div>
</div>
<div class="m" style="left:114px;top:1232.62px;">07675160</div>
<div class="m" style="left:240px;top:1232.62px;"><span style="color:#0000ff">8d bc 24</span></div>
<div class="m" style="left:460px;top:1232.62px;"><span style="color:#000080">LEA</span></div>
<div style="left:620px;top:0;width:117px;height:1362px;overflow:hidden">
<div class="m" style="left:0px;top:1232.62px;"><span style="color:#808000">EDI</span>,[<span style="color:#808000">ESP</span> + <span style="color:#008000">0xe8</span>]</div>
</div>
<div class="m" style="left:240px;top:1264.62px;"><span style="color:#0000ff">e8 00 00 00</span></div>
<div class="m" style="left:114px;top:1296.62px;">07675167</div>
<div class="m" style="left:240px;top:1296.62px;"><span style="color:#0000ff">f3 a5</span></div>
<div class="m" style="left:460px;top:1296.62px;"><span style="color:#000080">MOVSD.REP</span></div>
<div style="left:620px;top:0;width:117px;height:1362px;overflow:hidden">
<div class="m" style="left:0px;top:1296.62px;"><span style="color:#808000">ES</span>:<span style="color:#808000">EDI</span>,<span style="color:#808000">ES</span>:<span style="color:#808000">ESI</span></div>
</div>
<div class="m" style="left:114px;top:1328.62px;">07675169</div>
<div class="m" style="left:240px;top:1328.62px;"><span style="color:#0000ff">66 a5</span></div>
<div class="m" style="left:460px;top:1328.62px;"><span style="color:#000080">MOVSW</span></div>
<div style="left:620px;top:0;width:117px;height:1362px;overflow:hidden">
<div class="m" style="left:0px;top:1328.62px;"><span style="color:#808000">ES</span>:<span style="color:#808000">EDI</span>,<span style="color:#808000">ES</span>:<span style="color:#808000">ESI</span></div>
</div>
<div class="m" style="left:114px;top:1360.62px;">0767516b</div>
<div class="m" style="left:240px;top:1360.62px;"><span style="color:#0000ff">a4</span></div>
<div class="m" style="left:460px;top:1360.62px;"><span style="color:#000080">MOVSB</span></div>
<div style="left:620px;top:0;width:117px;height:1362px;overflow:hidden">
<div class="m" style="left:0px;top:1360.62px;"><span style="color:#808000">ES</span>:<span style="color:#808000">EDI</span>,<span style="color:#808000">ES</span>:<span style="color:#808000">ESI</span></div>
</div>
<div class="m" style="left:400px;top:848.62px;"><span style="color:#0000ff">LAB_07675144</span></div>
<div style="left:115.00px;top:683.00px;width:3px;height:30px;background:#e8b4b0"></div>
</div>
<div style="left:825.00px;top:358.00px;width:2px;height:873px;background:repeating-linear-gradient(#b4b4b4 0,#b4b4b4 11px,transparent 11px,transparent 20px)"></div>
<div style="left:825.00px;top:1229.00px;width:12px;height:2px;background:#b4b4b4"></div>
<div style="left:845.00px;top:1229.00px;width:12px;height:2px;background:#b4b4b4"></div>
<svg style="position:absolute;left:857.00px;top:1222.00px" width="17" height="17" viewBox="0 0 17 17"><polygon points="0,0 17,8.5 0,17" fill="#b4b4b4"/></svg>
<div style="left:849.00px;top:372.00px;width:2px;height:763px;background:#b4b4b4"></div>
<div style="left:849.00px;top:1133.00px;width:25px;height:2px;background:#b4b4b4"></div>
<svg style="position:absolute;left:842.00px;top:360.00px" width="16" height="14" viewBox="0 0 16 14"><polygon points="8,0 16,14 0,14" fill="#b4b4b4"/></svg>
<div style="left:704.00px;top:1049.00px;width:24px;height:3px;background:#000"></div>
<svg style="position:absolute;left:725.00px;top:1043.00px" width="10" height="15" viewBox="0 0 10 15"><polygon points="0,0 9,7.5 0,15" fill="#000"/></svg>
<div style="left:1652.00px;top:375.00px;width:19px;height:26px;background:repeating-linear-gradient(#d6bd8c 0,#d6bd8c 7px,#f0a020 7px,#f0a020 9px);border:2px solid #f5a000"></div>
<div style="left:1652.00px;top:419.00px;width:19px;height:17px;background:repeating-linear-gradient(#d6bd8c 0,#d6bd8c 7px,#f0a020 7px,#f0a020 9px);border:2px solid #f5a000"></div>
<div style="left:1652.00px;top:439.00px;width:19px;height:14px;background:repeating-linear-gradient(#d6bd8c 0,#d6bd8c 7px,#f0a020 7px,#f0a020 9px);border:2px solid #f5a000"></div>
<div style="left:1652.00px;top:469.00px;width:19px;height:10px;background:repeating-linear-gradient(#d6bd8c 0,#d6bd8c 7px,#f0a020 7px,#f0a020 9px);border:2px solid #f5a000"></div>
<div style="left:1652.00px;top:501.00px;width:19px;height:9px;background:repeating-linear-gradient(#d6bd8c 0,#d6bd8c 7px,#f0a020 7px,#f0a020 9px);border:2px solid #f5a000"></div>
<div style="left:1652.00px;top:645.00px;width:19px;height:10px;background:repeating-linear-gradient(#d6bd8c 0,#d6bd8c 7px,#f0a020 7px,#f0a020 9px);border:2px solid #f5a000"></div>
<div style="left:1652.00px;top:725.00px;width:19px;height:10px;background:repeating-linear-gradient(#d6bd8c 0,#d6bd8c 7px,#f0a020 7px,#f0a020 9px);border:2px solid #f5a000"></div>
<div style="left:1652.00px;top:809.00px;width:19px;height:10px;background:repeating-linear-gradient(#d6bd8c 0,#d6bd8c 7px,#f0a020 7px,#f0a020 9px);border:2px solid #f5a000"></div>
<div style="left:1652.00px;top:937.00px;width:19px;height:9px;background:repeating-linear-gradient(#d6bd8c 0,#d6bd8c 7px,#f0a020 7px,#f0a020 9px);border:2px solid #f5a000"></div>
<div style="left:1652.00px;top:998.00px;width:19px;height:8px;background:repeating-linear-gradient(#d6bd8c 0,#d6bd8c 7px,#f0a020 7px,#f0a020 9px);border:2px solid #f5a000"></div>
<div style="left:1652.00px;top:1017.00px;width:19px;height:10px;background:repeating-linear-gradient(#d6bd8c 0,#d6bd8c 7px,#f0a020 7px,#f0a020 9px);border:2px solid #f5a000"></div>
<div style="left:1652.00px;top:1043.00px;width:19px;height:9px;background:repeating-linear-gradient(#d6bd8c 0,#d6bd8c 7px,#f0a020 7px,#f0a020 9px);border:2px solid #f5a000"></div>
<div style="left:1652.00px;top:1062.00px;width:19px;height:54px;background:repeating-linear-gradient(#d6bd8c 0,#d6bd8c 7px,#f0a020 7px,#f0a020 9px);border:2px solid #f5a000"></div>
<div style="left:1652.00px;top:1131.00px;width:19px;height:31px;background:repeating-linear-gradient(#d6bd8c 0,#d6bd8c 7px,#f0a020 7px,#f0a020 9px);border:2px solid #f5a000"></div>
<div style="left:1652.00px;top:1177.00px;width:19px;height:19px;background:repeating-linear-gradient(#d6bd8c 0,#d6bd8c 7px,#f0a020 7px,#f0a020 9px);border:2px solid #f5a000"></div>
<div style="left:1652.00px;top:1205.00px;width:19px;height:21px;background:repeating-linear-gradient(#d6bd8c 0,#d6bd8c 7px,#f0a020 7px,#f0a020 9px);border:2px solid #f5a000"></div>
<div style="left:1652.00px;top:1234.00px;width:19px;height:8px;background:repeating-linear-gradient(#d6bd8c 0,#d6bd8c 7px,#f0a020 7px,#f0a020 9px);border:2px solid #f5a000"></div>
<div style="left:1652.00px;top:1250.00px;width:19px;height:20px;background:repeating-linear-gradient(#d6bd8c 0,#d6bd8c 7px,#f0a020 7px,#f0a020 9px);border:2px solid #f5a000"></div>
<div style="left:1652.00px;top:1284.00px;width:19px;height:18px;background:repeating-linear-gradient(#d6bd8c 0,#d6bd8c 7px,#f0a020 7px,#f0a020 9px);border:2px solid #f5a000"></div>
<div style="left:1652.00px;top:1309.00px;width:19px;height:18px;background:repeating-linear-gradient(#d6bd8c 0,#d6bd8c 7px,#f0a020 7px,#f0a020 9px);border:2px solid #f5a000"></div>
<div style="left:1652.00px;top:1348.00px;width:19px;height:15px;background:repeating-linear-gradient(#d6bd8c 0,#d6bd8c 7px,#f0a020 7px,#f0a020 9px);border:2px solid #f5a000"></div>
<div style="left:1652.00px;top:1499.00px;width:19px;height:18px;background:repeating-linear-gradient(#d6bd8c 0,#d6bd8c 7px,#f0a020 7px,#f0a020 9px);border:2px solid #f5a000"></div>
<div style="left:1652.00px;top:1558.00px;width:19px;height:8px;background:repeating-linear-gradient(#d6bd8c 0,#d6bd8c 7px,#f0a020 7px,#f0a020 9px);border:2px solid #f5a000"></div>
<div style="left:1652.00px;top:881.00px;width:16px;height:6px;background:#d0d0d0"></div>
<div style="left:1670.00px;top:881.00px;width:14px;height:8px;background:#8ef08e"></div>
<div style="left:1652.00px;top:1362.00px;width:19px;height:3px;background:#30e0e8"></div>
<div style="left:1652.00px;top:1489.00px;width:19px;height:7px;background:#a8d8e0;border:2px solid #33dddd"></div>
<div style="left:1652.00px;top:1497.00px;width:19px;height:3px;background:#30e0e8"></div>
<div style="left:1766px;top:302px;width:1762px;height:1448px;overflow:hidden">
<div style="left:2.00px;top:192.00px;width:1400px;height:960px;background:#9bfd98"></div>
<div style="left:2.00px;top:1152.00px;width:101px;height:32px;background:#9bfd98"></div>
<div style="left:433.00px;top:190.00px;width:20px;height:34px;background:#f0d860;border:2px solid #8c8c8c"></div>
<div style="left:86.00px;top:1154.00px;width:15px;height:30px;background:#f0d860"></div>
<div style="left:101.00px;top:1154.00px;width:3px;height:30px;background:#e00000"></div>
<div class="m" style="left:170.5px;top:6.62px;"><span style="color:#0000ff">FUN_076715e0</span>(<span style="color:#808000">iVar3</span>,<span style="color:#808000">uVar19</span>,(<span style="color:#0000f0">int</span>)<span style="color:#808000">uVar17</span>,(<span style="color:#0000f0">uint</span>)((<span style="color:#0000f0">ulonglong</span>)<span style="color:#808000">uVar17</span> &gt;&gt; <span style="color:#008000">0x20</span>));</div>
<div class="m" style="left:142.5px;top:38.62px;">}</div>
<div class="m" style="left:142.5px;top:70.62px;"><span style="color:#808000">uStack_b10</span> = <span style="color:#008000">0x7674dd4</span>;</div>
<svg style="position:absolute;left:437.30px;top:105.50px" width="13" height="13" viewBox="0 0 13 13"><path d="M6.5,0.5 V12.5 M1.3,3.5 L11.7,9.5 M1.3,9.5 L11.7,3.5" stroke="#000" stroke-width="2.3"/></svg>
<div class="m" style="left:142.5px;top:102.62px;"><span style="color:#808000">puVar4</span> = (<span style="color:#0000f0">undefined4</span>  )<span style="color:#0000ff">FUN_07675929</span>(<span style="color:#808000">aiStack_558</span>,<span style="color:#808000">uStack_7b0</span>,<span style="color:#808000">pvStack_7ac</span>);</div>
<div class="m" style="left:114.5px;top:134.62px;">}</div>
<div class="m" style="left:86.5px;top:166.62px;">}</div>
<div class="m" style="left:86.5px;top:198.62px;"><span style="color:#0000f0">else</span> <span style="color:#0000f0">if</span> (<span style="color:#808000">opcode</span> == <span style="color:#008000">0x42</span>) {</div>
<div class="m" style="left:114.5px;top:230.62px;"><span style="color:#808000">local_aec</span> = <span style="color:#808000">puVar12</span>;</div>
<svg style="position:absolute;left:409.30px;top:265.50px" width="13" height="13" viewBox="0 0 13 13"><path d="M6.5,0.5 V12.5 M1.3,3.5 L11.7,9.5 M1.3,9.5 L11.7,3.5" stroke="#000" stroke-width="2.3"/></svg>
<div class="m" style="left:114.5px;top:262.62px;"><span style="color:#808000">puVar4</span> = (<span style="color:#0000f0">undefined4</span>  )<span style="color:#0000ff">what_is_this</span>();</div>
<div class="m" style="left:114.5px;top:294.62px;"><span style="color:#808000">puVar14</span> = &amp;<span style="color:#808000">uStack_690</span>;</div>
<div class="m" style="left:114.5px;top:326.62px;"><span style="color:#0000f0">for</span> (<span style="color:#808000">iVar3</span> = <span style="color:#008000">5</span>; <span style="color:#808000">iVar3</span> != <span style="color:#008000">0</span>; <span style="color:#808000">iVar3</span> = <span style="color:#808000">iVar3</span> + <span style="color:#008000">-1</span>) {</div>
<svg style="position:absolute;left:143.30px;top:361.50px" width="13" height="13" viewBox="0 0 13 13"><path d="M6.5,0.5 V12.5 M1.3,3.5 L11.7,9.5 M1.3,9.5 L11.7,3.5" stroke="#000" stroke-width="2.3"/></svg>
<svg style="position:absolute;left:297.30px;top:361.50px" width="13" height="13" viewBox="0 0 13 13"><path d="M6.5,0.5 V12.5 M1.3,3.5 L11.7,9.5 M1.3,9.5 L11.7,3.5" stroke="#000" stroke-width="2.3"/></svg>
<div class="m" style="left:142.5px;top:358.62px;"> <span style="color:#808000">puVar14</span> =  <span style="color:#808000">puVar4</span>;</div>
<div class="m" style="left:142.5px;top:390.62px;"><span style="color:#808000">puVar4</span> = <span style="color:#808000">puVar4</span> + <span style="color:#008000">1</span>;</div>
<div class="m" style="left:142.5px;top:422.62px;"><span style="color:#808000">puVar14</span> = <span style="color:#808000">puVar14</span> + <span style="color:#008000">1</span>;</div>
<div class="m" style="left:114.5px;top:454.62px;">}</div>
<svg style="position:absolute;left:115.30px;top:489.50px" width="13" height="13" viewBox="0 0 13 13"><path d="M6.5,0.5 V12.5 M1.3,3.5 L11.7,9.5 M1.3,9.5 L11.7,3.5" stroke="#000" stroke-width="2.3"/></svg>
<svg style="position:absolute;left:297.30px;top:489.50px" width="13" height="13" viewBox="0 0 13 13"><path d="M6.5,0.5 V12.5 M1.3,3.5 L11.7,9.5 M1.3,9.5 L11.7,3.5" stroke="#000" stroke-width="2.3"/></svg>
<svg style="position:absolute;left:465.30px;top:489.50px" width="13" height="13" viewBox="0 0 13 13"><path d="M6.5,0.5 V12.5 M1.3,3.5 L11.7,9.5 M1.3,9.5 L11.7,3.5" stroke="#000" stroke-width="2.3"/></svg>
<svg style="position:absolute;left:647.30px;top:489.50px" width="13" height="13" viewBox="0 0 13 13"><path d="M6.5,0.5 V12.5 M1.3,3.5 L11.7,9.5 M1.3,9.5 L11.7,3.5" stroke="#000" stroke-width="2.3"/></svg>
<div class="m" style="left:114.5px;top:486.62px;"> (<span style="color:#0000f0">undefined2</span>  )<span style="color:#808000">puVar14</span> =  (<span style="color:#0000f0">undefined2</span>  )<span style="color:#808000">puVar4</span>;</div>
<svg style="position:absolute;left:115.30px;top:521.50px" width="13" height="13" viewBox="0 0 13 13"><path d="M6.5,0.5 V12.5 M1.3,3.5 L11.7,9.5 M1.3,9.5 L11.7,3.5" stroke="#000" stroke-width="2.3"/></svg>
<svg style="position:absolute;left:283.30px;top:521.50px" width="13" height="13" viewBox="0 0 13 13"><path d="M6.5,0.5 V12.5 M1.3,3.5 L11.7,9.5 M1.3,9.5 L11.7,3.5" stroke="#000" stroke-width="2.3"/></svg>
<svg style="position:absolute;left:605.30px;top:521.50px" width="13" height="13" viewBox="0 0 13 13"><path d="M6.5,0.5 V12.5 M1.3,3.5 L11.7,9.5 M1.3,9.5 L11.7,3.5" stroke="#000" stroke-width="2.3"/></svg>
<svg style="position:absolute;left:773.30px;top:521.50px" width="13" height="13" viewBox="0 0 13 13"><path d="M6.5,0.5 V12.5 M1.3,3.5 L11.7,9.5 M1.3,9.5 L11.7,3.5" stroke="#000" stroke-width="2.3"/></svg>
<div class="m" style="left:114.5px;top:518.62px;"> (<span style="color:#0000f0">undefined</span>  )((<span style="color:#0000f0">int</span>)<span style="color:#808000">puVar14</span> + <span style="color:#008000">2</span>) =  (<span style="color:#0000f0">undefined</span>  )((<span style="color:#0000f0">int</span>)<span style="color:#808000">puVar4</span> + <span style="color:#008000">2</span>);</div>
<svg style="position:absolute;left:409.30px;top:553.50px" width="13" height="13" viewBox="0 0 13 13"><path d="M6.5,0.5 V12.5 M1.3,3.5 L11.7,9.5 M1.3,9.5 L11.7,3.5" stroke="#000" stroke-width="2.3"/></svg>
<div class="m" style="left:114.5px;top:550.62px;"><span style="color:#808000">puVar4</span> = (<span style="color:#0000f0">undefined4</span>  )<span style="color:#0000ff">what_is_this</span>();</div>
<div class="m" style="left:114.5px;top:582.62px;"><span style="color:#808000">uStack_9bc</span> = <span style="color:#008000">0</span>;</div>
<div class="m" style="left:114.5px;top:614.62px;"><span style="color:#808000">puVar14</span> = &amp;<span style="color:#808000">uStack_6c0</span>;</div>
<div class="m" style="left:114.5px;top:646.62px;"><span style="color:#0000f0">for</span> (<span style="color:#808000">iVar3</span> = <span style="color:#008000">5</span>; <span style="color:#808000">iVar3</span> != <span style="color:#008000">0</span>; <span style="color:#808000">iVar3</span> = <span style="color:#808000">iVar3</span> + <span style="color:#008000">-1</span>) {</div>
<svg style="position:absolute;left:143.30px;top:681.50px" width="13" height="13" viewBox="0 0 13 13"><path d="M6.5,0.5 V12.5 M1.3,3.5 L11.7,9.5 M1.3,9.5 L11.7,3.5" stroke="#000" stroke-width="2.3"/></svg>
<svg style="position:absolute;left:297.30px;top:681.50px" width="13" height="13" viewBox="0 0 13 13"><path d="M6.5,0.5 V12.5 M1.3,3.5 L11.7,9.5 M1.3,9.5 L11.7,3.5" stroke="#000" stroke-width="2.3"/></svg>
<div class="m" style="left:142.5px;top:678.62px;"> <span style="color:#808000">puVar14</span> =  <span style="color:#808000">puVar4</span>;</div>
<div class="m" style="left:142.5px;top:710.62px;"><span style="color:#808000">puVar4</span> = <span style="color:#808000">puVar4</span> + <span style="color:#008000">1</span>;</div>
<div class="m" style="left:142.5px;top:742.62px;"><span style="color:#808000">puVar14</span> = <span style="color:#808000">puVar14</span> + <span style="color:#008000">1</span>;</div>
<div class="m" style="left:114.5px;top:774.62px;">}</div>
<svg style="position:absolute;left:115.30px;top:809.50px" width="13" height="13" viewBox="0 0 13 13"><path d="M6.5,0.5 V12.5 M1.3,3.5 L11.7,9.5 M1.3,9.5 L11.7,3.5" stroke="#000" stroke-width="2.3"/></svg>
<svg style="position:absolute;left:297.30px;top:809.50px" width="13" height="13" viewBox="0 0 13 13"><path d="M6.5,0.5 V12.5 M1.3,3.5 L11.7,9.5 M1.3,9.5 L11.7,3.5" stroke="#000" stroke-width="2.3"/></svg>
<svg style="position:absolute;left:465.30px;top:809.50px" width="13" height="13" viewBox="0 0 13 13"><path d="M6.5,0.5 V12.5 M1.3,3.5 L11.7,9.5 M1.3,9.5 L11.7,3.5" stroke="#000" stroke-width="2.3"/></svg>
<svg style="position:absolute;left:647.30px;top:809.50px" width="13" height="13" viewBox="0 0 13 13"><path d="M6.5,0.5 V12.5 M1.3,3.5 L11.7,9.5 M1.3,9.5 L11.7,3.5" stroke="#000" stroke-width="2.3"/></svg>
<div class="m" style="left:114.5px;top:806.62px;"> (<span style="color:#0000f0">undefined2</span>  )<span style="color:#808000">puVar14</span> =  (<span style="color:#0000f0">undefined2</span>  )<span style="color:#808000">puVar4</span>;</div>
<svg style="position:absolute;left:115.30px;top:841.50px" width="13" height="13" viewBox="0 0 13 13"><path d="M6.5,0.5 V12.5 M1.3,3.5 L11.7,9.5 M1.3,9.5 L11.7,3.5" stroke="#000" stroke-width="2.3"/></svg>
<svg style="position:absolute;left:283.30px;top:841.50px" width="13" height="13" viewBox="0 0 13 13"><path d="M6.5,0.5 V12.5 M1.3,3.5 L11.7,9.5 M1.3,9.5 L11.7,3.5" stroke="#000" stroke-width="2.3"/></svg>
<svg style="position:absolute;left:605.30px;top:841.50px" width="13" height="13" viewBox="0 0 13 13"><path d="M6.5,0.5 V12.5 M1.3,3.5 L11.7,9.5 M1.3,9.5 L11.7,3.5" stroke="#000" stroke-width="2.3"/></svg>
<svg style="position:absolute;left:773.30px;top:841.50px" width="13" height="13" viewBox="0 0 13 13"><path d="M6.5,0.5 V12.5 M1.3,3.5 L11.7,9.5 M1.3,9.5 L11.7,3.5" stroke="#000" stroke-width="2.3"/></svg>
<div class="m" style="left:114.5px;top:838.62px;"> (<span style="color:#0000f0">undefined</span>  )((<span style="color:#0000f0">int</span>)<span style="color:#808000">puVar14</span> + <span style="color:#008000">2</span>) =  (<span style="color:#0000f0">undefined</span>  )((<span style="color:#0000f0">int</span>)<span style="color:#808000">puVar4</span> + <span style="color:#008000">2</span>);</div>
<div class="m" style="left:114.5px;top:870.62px;"><span style="color:#808000">uStack_9c0</span> = <span style="color:#008000">4</span>;</div>
<div class="m" style="left:114.5px;top:902.62px;"><span style="color:#808000">uStack_90c</span> = <span style="color:#008000">4</span>;</div>
<div class="m" style="left:114.5px;top:934.62px;"><span style="color:#808000">uStack_908</span> = <span style="color:#008000">0</span>;</div>
<div class="m" style="left:114.5px;top:966.62px;"><span style="color:#808000">uStack_904</span> = <span style="color:#008000">0</span>;</div>
<div class="m" style="left:114.5px;top:998.62px;"><span style="color:#808000">fVar16</span> = <span style="color:#0000ff">get_some_float_value</span>();</div>
<div class="m" style="left:114.5px;top:1030.62px;"><span style="color:#808000">local_ad0</span> = (<span style="color:#0000f0">double</span>)<span style="color:#808000">fVar16</span>;</div>
<div class="m" style="left:114.5px;top:1062.62px;"><span style="color:#808000">fVar16</span> = <span style="color:#0000ff">get_some_float_value</span>();</div>
<svg style="position:absolute;left:969.30px;top:1097.50px" width="13" height="13" viewBox="0 0 13 13"><path d="M6.5,0.5 V12.5 M1.3,3.5 L11.7,9.5 M1.3,9.5 L11.7,3.5" stroke="#000" stroke-width="2.3"/></svg>
<div class="m" style="left:114.5px;top:1094.62px;"><span style="color:#0000ff">FUN_07671931</span>(<span style="color:#808000">extraout_ECX_09</span>,<span style="color:#808000">extraout_EDX_18</span>,(<span style="color:#0000f0">double</span>)(<span style="color:#808000">fVar16</span>   (<span style="color:#0000f0">float10</span>)<span style="color:#808000">local_ad0</span>));</div>
<div class="m" style="left:114.5px;top:1126.62px;"><span style="color:#808000">puVar4</span> = &amp;<span style="color:#808000">uStack_90c</span>;</div>
<div class="m" style="left:86.5px;top:1158.62px;">}</div>
<div class="m" style="left:86.5px;top:1190.62px;"><span style="color:#0000f0">else</span> {</div>
<div class="m" style="left:114.5px;top:1222.62px;"><span style="color:#0000f0">if</span> (<span style="color:#808000">opcode</span> != <span style="color:#008000">0x43</span>) {</div>
<div class="m" style="left:142.5px;top:1254.62px;"><span style="color:#0000f0">if</span> (<span style="color:#808000">opcode</span> == <span style="color:#008000">0x44</span>) {</div>
<div class="m" style="left:170.5px;top:1286.62px;"><span style="color:#808000">local_aec</span> = <span style="color:#808000">puVar12</span>;</div>
<svg style="position:absolute;left:465.30px;top:1321.50px" width="13" height="13" viewBox="0 0 13 13"><path d="M6.5,0.5 V12.5 M1.3,3.5 L11.7,9.5 M1.3,9.5 L11.7,3.5" stroke="#000" stroke-width="2.3"/></svg>
<div class="m" style="left:170.5px;top:1318.62px;"><span style="color:#808000">puVar4</span> = (<span style="color:#0000f0">undefined4</span>  )<span style="color:#0000ff">what_is_this</span>();</div>
<div class="m" style="left:170.5px;top:1350.62px;"><span style="color:#808000">puVar14</span> = &amp;<span style="color:#808000">uStack_8b8</span>;</div>
<div class="m" style="left:170.5px;top:1382.62px;"><span style="color:#0000f0">for</span> (<span style="color:#808000">iVar3</span> = <span style="color:#008000">5</span>; <span style="color:#808000">iVar3</span> != <span style="color:#008000">0</span>; <span style="color:#808000">iVar3</span> = <span style="color:#808000">iVar3</span> + <span style="color:#008000">-1</span>) {</div>
<svg style="position:absolute;left:199.30px;top:1417.50px" width="13" height="13" viewBox="0 0 13 13"><path d="M6.5,0.5 V12.5 M1.3,3.5 L11.7,9.5 M1.3,9.5 L11.7,3.5" stroke="#000" stroke-width="2.3"/></svg>
<svg style="position:absolute;left:353.30px;top:1417.50px" width="13" height="13" viewBox="0 0 13 13"><path d="M6.5,0.5 V12.5 M1.3,3.5 L11.7,9.5 M1.3,9.5 L11.7,3.5" stroke="#000" stroke-width="2.3"/></svg>
<div class="m" style="left:198.5px;top:1414.62px;"> <span style="color:#808000">puVar14</span> =  <span style="color:#808000">puVar4</span>;</div>
<div class="m" style="left:198.5px;top:1446.62px;"><span style="color:#808000">puVar4</span> = <span style="color:#808000">puVar4</span> + <span style="color:#008000">1</span>;</div>
</div>
<div style="left:1704px;top:302px;width:60px;height:1416px;overflow:hidden">
<div class="m" style="left:13.0px;top:6.62px;">872</div>
<div class="m" style="left:13.0px;top:38.62px;">873</div>
<div class="m" style="left:13.0px;top:70.62px;">874</div>
<div class="m" style="left:13.0px;top:102.62px;">875</div>
<div class="m" style="left:13.0px;top:134.62px;">876</div>
<div class="m" style="left:13.0px;top:166.62px;">877</div>
<div class="m" style="left:13.0px;top:198.62px;">878</div>
<div class="m" style="left:13.0px;top:230.62px;">879</div>
<div class="m" style="left:13.0px;top:262.62px;">880</div>
<div class="m" style="left:13.0px;top:294.62px;">881</div>
<div class="m" style="left:13.0px;top:326.62px;">882</div>
<div class="m" style="left:13.0px;top:358.62px;">883</div>
<div class="m" style="left:13.0px;top:390.62px;">884</div>
<div class="m" style="left:13.0px;top:422.62px;">885</div>
<div class="m" style="left:13.0px;top:454.62px;">886</div>
<div class="m" style="left:13.0px;top:486.62px;">887</div>
<div class="m" style="left:13.0px;top:518.62px;">888</div>
<div class="m" style="left:13.0px;top:550.62px;">889</div>
<div class="m" style="left:13.0px;top:582.62px;">890</div>
<div class="m" style="left:13.0px;top:614.62px;">891</div>
<div class="m" style="left:13.0px;top:646.62px;">892</div>
<div class="m" style="left:13.0px;top:678.62px;">893</div>
<div class="m" style="left:13.0px;top:710.62px;">894</div>
<div class="m" style="left:13.0px;top:742.62px;">895</div>
<div class="m" style="left:13.0px;top:774.62px;">896</div>
<div class="m" style="left:13.0px;top:806.62px;">897</div>
<div class="m" style="left:13.0px;top:838.62px;">898</div>
<div class="m" style="left:13.0px;top:870.62px;">899</div>
<div class="m" style="left:13.0px;top:902.62px;">900</div>
<div class="m" style="left:13.0px;top:934.62px;">901</div>
<div class="m" style="left:13.0px;top:966.62px;">902</div>
<div class="m" style="left:13.0px;top:998.62px;">903</div>
<div class="m" style="left:13.0px;top:1030.62px;">904</div>
<div class="m" style="left:13.0px;top:1062.62px;">905</div>
<div class="m" style="left:13.0px;top:1094.62px;">906</div>
<div class="m" style="left:13.0px;top:1126.62px;">907</div>
<div class="m" style="left:13.0px;top:1158.62px;">908</div>
<div class="m" style="left:13.0px;top:1190.62px;">909</div>
<div class="m" style="left:13.0px;top:1222.62px;">910</div>
<div class="m" style="left:13.0px;top:1254.62px;">911</div>
<div class="m" style="left:13.0px;top:1286.62px;">912</div>
<div class="m" style="left:13.0px;top:1318.62px;">913</div>
<div class="m" style="left:13.0px;top:1350.62px;">914</div>
<div class="m" style="left:13.0px;top:1382.62px;">915</div>
<div class="m" style="left:13.0px;top:1414.62px;">916</div>
<div class="m" style="left:13.0px;top:1446.62px;">917</div>
</div>
</body></html>
